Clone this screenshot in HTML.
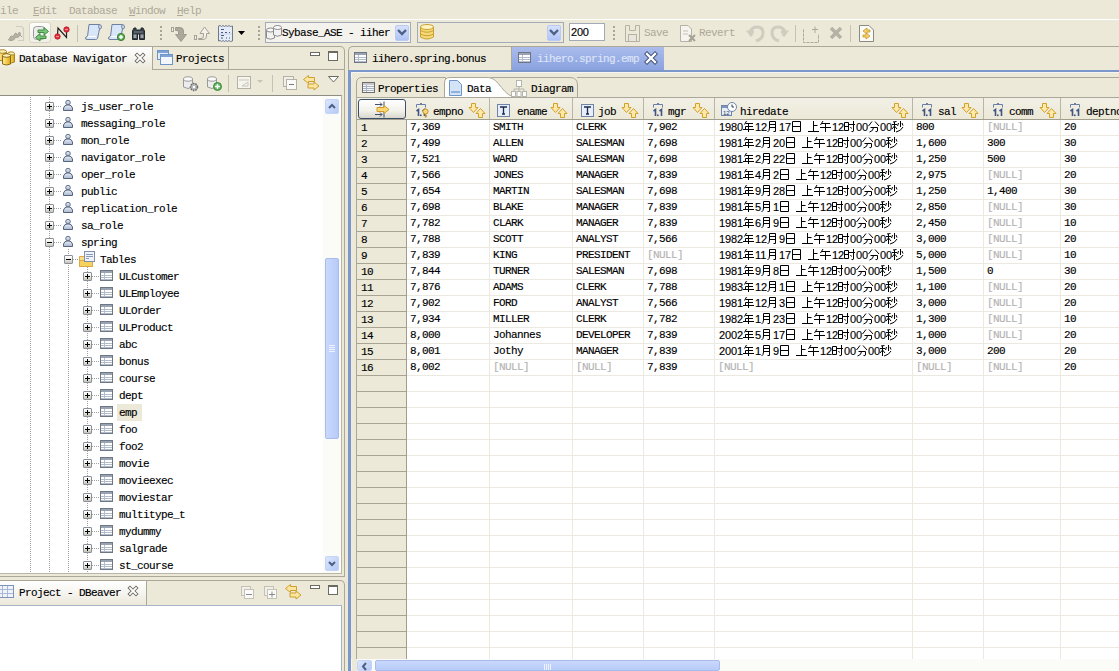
<!DOCTYPE html><html><head><meta charset="utf-8"><style>
*{margin:0;padding:0;box-sizing:border-box}
html,body{width:1119px;height:671px;overflow:hidden;background:#ECE9D8;position:relative}
.ab{position:absolute}
.t{position:absolute;font-family:'Liberation Mono', monospace;font-size:11px;letter-spacing:-0.6px;line-height:12px;white-space:nowrap;color:#000;-webkit-text-stroke:0.15px currentColor}
.s{position:absolute;font-family:'Liberation Sans', sans-serif;font-size:11px;line-height:12px;white-space:nowrap;color:#000;-webkit-text-stroke:0.15px currentColor}
svg{position:absolute;overflow:visible}
</style></head><body>
<svg width="0" height="0" style="position:absolute"><defs><g id="c_nian" fill="none" stroke="#000"><path d="M3.5 0 L1.5 3.5 M2.5 2.5 H10 M2.5 5.5 H10 M0 8.5 H11 M5.5 2.5 V11 M2.5 5.5 V8.5"/></g><g id="c_yue" fill="none" stroke="#000"><path d="M2.5 0.5 V7 Q2.5 10 0.5 11 M2.5 0.5 H8.5 V10.5 H6.5 M2.5 3.5 H8.5 M2.5 6.5 H8.5"/></g><g id="c_ri" fill="none" stroke="#000"><path d="M1.5 0.5 H9.5 V10.5 H1.5 Z M1.5 5.5 H9.5"/></g><g id="c_shang" fill="none" stroke="#000"><path d="M5.5 0 V10.5 M5.5 4.5 H9.5 M0 10.5 H11"/></g><g id="c_wu" fill="none" stroke="#000"><path d="M3 0 L0.5 4 M2 2.5 H10 M0 6.5 H11 M5.5 2.5 V11"/></g><g id="c_shi" fill="none" stroke="#000"><path d="M0.5 1.5 H4.5 V9.5 H0.5 Z M0.5 5.5 H4.5 M5 3.5 H11 M9.5 0 V10 Q9.5 11 7.5 10.5 M6.5 6 L7.5 7.5"/></g><g id="c_fen" fill="none" stroke="#000"><path d="M4 0.5 L0.5 5 M7 0.5 L11 5 M2.5 6.5 H9.5 V10 Q9.5 11 7.5 10.5 M5.5 6.5 Q5.5 10 1.5 11"/></g><g id="c_miao" fill="none" stroke="#000"><path d="M0 3.5 H5 M2.5 1 V11 M0 8 L2.5 5 L5 8 M8.5 0 V6 M6.5 2 L5.5 5 M10 2 L11 4.5 M11 6 Q9 10 4 11 M1 1 L4.5 0.5"/></g></defs></svg>
<div class="t" style="left:-6px;top:5px;color:#ACA899;-webkit-text-stroke:0">File</div>
<div class="t" style="left:33px;top:5px;color:#ACA899;-webkit-text-stroke:0">Edit</div>
<div class="t" style="left:69px;top:5px;color:#ACA899;-webkit-text-stroke:0">Database</div>
<div class="t" style="left:129px;top:5px;color:#ACA899;-webkit-text-stroke:0">Window</div>
<div class="t" style="left:177px;top:5px;color:#ACA899;-webkit-text-stroke:0">Help</div>
<div class="ab" style="left:-6px;top:15px;width:6px;height:1px;background:#ACA899"></div>
<div class="ab" style="left:33px;top:15px;width:6px;height:1px;background:#ACA899"></div>
<div class="ab" style="left:129px;top:15px;width:6px;height:1px;background:#ACA899"></div>
<div class="ab" style="left:177px;top:15px;width:6px;height:1px;background:#ACA899"></div>
<div class="ab" style="left:0px;top:19px;width:1119px;height:1px;background:#fff"></div>
<div class="ab" style="left:29px;top:22px;width:22px;height:21px;border:1px solid #D8D5C8;border-radius:3px;background:linear-gradient(#fdfdfb,#f0efe8)"></div>
<div class="ab" style="left:77px;top:25px;width:1px;height:17px;background:#C5C2B2"></div>
<div class="ab" style="left:160px;top:26px;width:2px;height:2px;background:#A8A595"></div>
<div class="ab" style="left:160px;top:30px;width:2px;height:2px;background:#A8A595"></div>
<div class="ab" style="left:160px;top:34px;width:2px;height:2px;background:#A8A595"></div>
<div class="ab" style="left:160px;top:38px;width:2px;height:2px;background:#A8A595"></div>
<div class="ab" style="left:258px;top:26px;width:2px;height:2px;background:#A8A595"></div>
<div class="ab" style="left:258px;top:30px;width:2px;height:2px;background:#A8A595"></div>
<div class="ab" style="left:258px;top:34px;width:2px;height:2px;background:#A8A595"></div>
<div class="ab" style="left:258px;top:38px;width:2px;height:2px;background:#A8A595"></div>
<div class="ab" style="left:613px;top:26px;width:2px;height:2px;background:#A8A595"></div>
<div class="ab" style="left:613px;top:30px;width:2px;height:2px;background:#A8A595"></div>
<div class="ab" style="left:613px;top:34px;width:2px;height:2px;background:#A8A595"></div>
<div class="ab" style="left:613px;top:38px;width:2px;height:2px;background:#A8A595"></div>
<div class="ab" style="left:795px;top:25px;width:1px;height:17px;background:#C5C2B2"></div>
<div class="ab" style="left:850px;top:25px;width:1px;height:17px;background:#C5C2B2"></div>
<div class="ab" style="left:265px;top:22px;width:146px;height:21px;border:1px solid #A4ABB8;background:#F3F2EC"></div>
<div class="ab" style="left:395px;top:25px;width:14px;height:16px;border-radius:2px;background:linear-gradient(#D6E1FC,#AFC4F6);border:1px solid #B9CBF3"></div>
<svg style="left:397px;top:29px" width="10" height="7" viewBox="0 0 10 7"><path d="M1 1 L5 5 L9 1" stroke="#4D6185" stroke-width="2.4" fill="none"/></svg>
<div class="t" style="left:282px;top:27px;">Sybase_ASE - iiher</div>
<div class="ab" style="left:417px;top:22px;width:147px;height:21px;border:1px solid #A4ABB8;background:#ECE9D8"></div>
<div class="ab" style="left:547px;top:25px;width:14px;height:16px;border-radius:2px;background:linear-gradient(#D6E1FC,#AFC4F6);border:1px solid #B9CBF3"></div>
<svg style="left:549px;top:29px" width="10" height="7" viewBox="0 0 10 7"><path d="M1 1 L5 5 L9 1" stroke="#4D6185" stroke-width="2.4" fill="none"/></svg>
<div class="ab" style="left:569px;top:23px;width:36px;height:18px;border:1px solid #A4ABB8;background:#fff"></div>
<div class="t" style="left:571px;top:26px;font-family:'Liberation Sans', sans-serif;font-size:11px;letter-spacing:-0.2px">200</div>
<div class="t" style="left:644px;top:27px;color:#ACA899;-webkit-text-stroke:0">Save</div>
<div class="t" style="left:699px;top:27px;color:#ACA899;-webkit-text-stroke:0">Revert</div>
<div class="ab" style="left:0px;top:46px;width:345px;height:531px;border:1px solid #ACA899;border-left:none;border-top-right-radius:5px"></div>
<div class="ab" style="left:0px;top:47px;width:152px;height:23px;background:linear-gradient(#FFFFFF,#F3F2EC 60%,#ECE9D8)"></div>
<div class="ab" style="left:152px;top:46px;width:1px;height:24px;background:#ACA899"></div>
<div class="ab" style="left:228px;top:46px;width:1px;height:24px;background:#ACA899"></div>
<div class="ab" style="left:152px;top:69px;width:192px;height:1px;background:#ACA899"></div>
<div class="t" style="left:19px;top:53px;">Database Navigator</div>
<div class="t" style="left:176px;top:53px;">Projects</div>
<div class="ab" style="left:0px;top:95px;width:342px;height:479px;background:#fff;border-top:1px solid #8E8D84;border-right:1px solid #B8B6A8;border-bottom:1px solid #B8B6A8"></div>
<div class="ab" style="left:0px;top:580px;width:345px;height:91px;border:1px solid #ACA899;border-left:none;border-bottom:none;border-top-right-radius:5px"></div>
<div class="ab" style="left:0px;top:581px;width:146px;height:24px;background:linear-gradient(#FFFFFF,#F3F2EC 60%,#ECE9D8)"></div>
<div class="ab" style="left:146px;top:581px;width:1px;height:24px;background:#ACA899"></div>
<div class="t" style="left:19px;top:587px;">Project - DBeaver</div>
<div class="ab" style="left:0px;top:605px;width:342px;height:66px;background:#fff;border-top:1px solid #A5B3C6;border-right:1px solid #A5B3C6"></div>
<div class="ab" style="left:348px;top:46px;width:771px;height:625px;border-left:1px solid #ACA899;border-top:1px solid #ACA899;border-top-left-radius:5px"></div>
<div class="ab" style="left:511px;top:47px;width:1px;height:23px;background:#ACA899"></div>
<div class="t" style="left:372px;top:53px;">iihero.spring.bonus</div>
<div class="ab" style="left:512px;top:47px;width:152px;height:23px;background:linear-gradient(#ABBCEC,#8AA2E0)"></div>
<div class="t" style="left:537px;top:53px;color:#DDE5F7">iihero.spring.emp</div>
<div class="ab" style="left:348px;top:70px;width:771px;height:2px;background:#7C98CA"></div>
<div class="ab" style="left:348px;top:70px;width:3px;height:601px;background:#7C98CA"></div>
<div class="ab" style="left:351px;top:72px;width:768px;height:599px;background:#ECE9D8;border-top:1px solid #F6F5F0;border-left:1px solid #F6F5F0"></div>
<div class="ab" style="left:30px;top:97px;width:1px;height:476px;background:repeating-linear-gradient(to bottom,#A0A0A0 0 1px,transparent 1px 2px)"></div>
<div class="ab" style="left:49px;top:97px;width:1px;height:476px;background:repeating-linear-gradient(to bottom,#A0A0A0 0 1px,transparent 1px 2px)"></div>
<div class="ab" style="left:68px;top:249px;width:1px;height:324px;background:repeating-linear-gradient(to bottom,#A0A0A0 0 1px,transparent 1px 2px)"></div>
<div class="ab" style="left:87px;top:267px;width:1px;height:306px;background:repeating-linear-gradient(to bottom,#A0A0A0 0 1px,transparent 1px 2px)"></div>
<div class="ab" style="left:117px;top:404px;width:25px;height:17px;background:#ECE9D8"></div>
<div class="ab" style="left:54px;top:106px;width:8px;height:1px;background:repeating-linear-gradient(to right,#A0A0A0 0 1px,transparent 1px 2px)"></div>
<div class="ab" style="left:45px;top:102px;width:9px;height:9px;border:1px solid #8A9099;border-radius:1px;background:linear-gradient(#FFFFFF,#E6E5DE 60%,#C4C3BA)"></div>
<div class="ab" style="left:47px;top:106px;width:5px;height:1px;background:#000"></div>
<div class="ab" style="left:49px;top:104px;width:1px;height:5px;background:#000"></div>
<svg style="left:63px;top:100px" width="10" height="11" viewBox="0 0 10 11"><defs><linearGradient id="pg" x1="0" y1="0" x2="0" y2="1"><stop offset="0" stop-color="#E8EEF6"/><stop offset="1" stop-color="#A9B8CE"/></linearGradient></defs><circle cx="5" cy="2.6" r="2.3" fill="url(#pg)" stroke="#62718C" stroke-width="1"/><path d="M0.5 10.5 L0.5 8 Q1.5 5 4 5 L6 5 Q8.5 5 9.5 8 L9.5 10.5 Z" fill="url(#pg)" stroke="#55647F" stroke-width="1"/></svg>
<div class="t" style="left:81px;top:101px;">js_user_role</div>
<div class="ab" style="left:54px;top:123px;width:8px;height:1px;background:repeating-linear-gradient(to right,#A0A0A0 0 1px,transparent 1px 2px)"></div>
<div class="ab" style="left:45px;top:119px;width:9px;height:9px;border:1px solid #8A9099;border-radius:1px;background:linear-gradient(#FFFFFF,#E6E5DE 60%,#C4C3BA)"></div>
<div class="ab" style="left:47px;top:123px;width:5px;height:1px;background:#000"></div>
<div class="ab" style="left:49px;top:121px;width:1px;height:5px;background:#000"></div>
<svg style="left:63px;top:117px" width="10" height="11" viewBox="0 0 10 11"><defs><linearGradient id="pg" x1="0" y1="0" x2="0" y2="1"><stop offset="0" stop-color="#E8EEF6"/><stop offset="1" stop-color="#A9B8CE"/></linearGradient></defs><circle cx="5" cy="2.6" r="2.3" fill="url(#pg)" stroke="#62718C" stroke-width="1"/><path d="M0.5 10.5 L0.5 8 Q1.5 5 4 5 L6 5 Q8.5 5 9.5 8 L9.5 10.5 Z" fill="url(#pg)" stroke="#55647F" stroke-width="1"/></svg>
<div class="t" style="left:81px;top:118px;">messaging_role</div>
<div class="ab" style="left:54px;top:140px;width:8px;height:1px;background:repeating-linear-gradient(to right,#A0A0A0 0 1px,transparent 1px 2px)"></div>
<div class="ab" style="left:45px;top:136px;width:9px;height:9px;border:1px solid #8A9099;border-radius:1px;background:linear-gradient(#FFFFFF,#E6E5DE 60%,#C4C3BA)"></div>
<div class="ab" style="left:47px;top:140px;width:5px;height:1px;background:#000"></div>
<div class="ab" style="left:49px;top:138px;width:1px;height:5px;background:#000"></div>
<svg style="left:63px;top:134px" width="10" height="11" viewBox="0 0 10 11"><defs><linearGradient id="pg" x1="0" y1="0" x2="0" y2="1"><stop offset="0" stop-color="#E8EEF6"/><stop offset="1" stop-color="#A9B8CE"/></linearGradient></defs><circle cx="5" cy="2.6" r="2.3" fill="url(#pg)" stroke="#62718C" stroke-width="1"/><path d="M0.5 10.5 L0.5 8 Q1.5 5 4 5 L6 5 Q8.5 5 9.5 8 L9.5 10.5 Z" fill="url(#pg)" stroke="#55647F" stroke-width="1"/></svg>
<div class="t" style="left:81px;top:135px;">mon_role</div>
<div class="ab" style="left:54px;top:157px;width:8px;height:1px;background:repeating-linear-gradient(to right,#A0A0A0 0 1px,transparent 1px 2px)"></div>
<div class="ab" style="left:45px;top:153px;width:9px;height:9px;border:1px solid #8A9099;border-radius:1px;background:linear-gradient(#FFFFFF,#E6E5DE 60%,#C4C3BA)"></div>
<div class="ab" style="left:47px;top:157px;width:5px;height:1px;background:#000"></div>
<div class="ab" style="left:49px;top:155px;width:1px;height:5px;background:#000"></div>
<svg style="left:63px;top:151px" width="10" height="11" viewBox="0 0 10 11"><defs><linearGradient id="pg" x1="0" y1="0" x2="0" y2="1"><stop offset="0" stop-color="#E8EEF6"/><stop offset="1" stop-color="#A9B8CE"/></linearGradient></defs><circle cx="5" cy="2.6" r="2.3" fill="url(#pg)" stroke="#62718C" stroke-width="1"/><path d="M0.5 10.5 L0.5 8 Q1.5 5 4 5 L6 5 Q8.5 5 9.5 8 L9.5 10.5 Z" fill="url(#pg)" stroke="#55647F" stroke-width="1"/></svg>
<div class="t" style="left:81px;top:152px;">navigator_role</div>
<div class="ab" style="left:54px;top:174px;width:8px;height:1px;background:repeating-linear-gradient(to right,#A0A0A0 0 1px,transparent 1px 2px)"></div>
<div class="ab" style="left:45px;top:170px;width:9px;height:9px;border:1px solid #8A9099;border-radius:1px;background:linear-gradient(#FFFFFF,#E6E5DE 60%,#C4C3BA)"></div>
<div class="ab" style="left:47px;top:174px;width:5px;height:1px;background:#000"></div>
<div class="ab" style="left:49px;top:172px;width:1px;height:5px;background:#000"></div>
<svg style="left:63px;top:168px" width="10" height="11" viewBox="0 0 10 11"><defs><linearGradient id="pg" x1="0" y1="0" x2="0" y2="1"><stop offset="0" stop-color="#E8EEF6"/><stop offset="1" stop-color="#A9B8CE"/></linearGradient></defs><circle cx="5" cy="2.6" r="2.3" fill="url(#pg)" stroke="#62718C" stroke-width="1"/><path d="M0.5 10.5 L0.5 8 Q1.5 5 4 5 L6 5 Q8.5 5 9.5 8 L9.5 10.5 Z" fill="url(#pg)" stroke="#55647F" stroke-width="1"/></svg>
<div class="t" style="left:81px;top:169px;">oper_role</div>
<div class="ab" style="left:54px;top:191px;width:8px;height:1px;background:repeating-linear-gradient(to right,#A0A0A0 0 1px,transparent 1px 2px)"></div>
<div class="ab" style="left:45px;top:187px;width:9px;height:9px;border:1px solid #8A9099;border-radius:1px;background:linear-gradient(#FFFFFF,#E6E5DE 60%,#C4C3BA)"></div>
<div class="ab" style="left:47px;top:191px;width:5px;height:1px;background:#000"></div>
<div class="ab" style="left:49px;top:189px;width:1px;height:5px;background:#000"></div>
<svg style="left:63px;top:185px" width="10" height="11" viewBox="0 0 10 11"><defs><linearGradient id="pg" x1="0" y1="0" x2="0" y2="1"><stop offset="0" stop-color="#E8EEF6"/><stop offset="1" stop-color="#A9B8CE"/></linearGradient></defs><circle cx="5" cy="2.6" r="2.3" fill="url(#pg)" stroke="#62718C" stroke-width="1"/><path d="M0.5 10.5 L0.5 8 Q1.5 5 4 5 L6 5 Q8.5 5 9.5 8 L9.5 10.5 Z" fill="url(#pg)" stroke="#55647F" stroke-width="1"/></svg>
<div class="t" style="left:81px;top:186px;">public</div>
<div class="ab" style="left:54px;top:208px;width:8px;height:1px;background:repeating-linear-gradient(to right,#A0A0A0 0 1px,transparent 1px 2px)"></div>
<div class="ab" style="left:45px;top:204px;width:9px;height:9px;border:1px solid #8A9099;border-radius:1px;background:linear-gradient(#FFFFFF,#E6E5DE 60%,#C4C3BA)"></div>
<div class="ab" style="left:47px;top:208px;width:5px;height:1px;background:#000"></div>
<div class="ab" style="left:49px;top:206px;width:1px;height:5px;background:#000"></div>
<svg style="left:63px;top:202px" width="10" height="11" viewBox="0 0 10 11"><defs><linearGradient id="pg" x1="0" y1="0" x2="0" y2="1"><stop offset="0" stop-color="#E8EEF6"/><stop offset="1" stop-color="#A9B8CE"/></linearGradient></defs><circle cx="5" cy="2.6" r="2.3" fill="url(#pg)" stroke="#62718C" stroke-width="1"/><path d="M0.5 10.5 L0.5 8 Q1.5 5 4 5 L6 5 Q8.5 5 9.5 8 L9.5 10.5 Z" fill="url(#pg)" stroke="#55647F" stroke-width="1"/></svg>
<div class="t" style="left:81px;top:203px;">replication_role</div>
<div class="ab" style="left:54px;top:225px;width:8px;height:1px;background:repeating-linear-gradient(to right,#A0A0A0 0 1px,transparent 1px 2px)"></div>
<div class="ab" style="left:45px;top:221px;width:9px;height:9px;border:1px solid #8A9099;border-radius:1px;background:linear-gradient(#FFFFFF,#E6E5DE 60%,#C4C3BA)"></div>
<div class="ab" style="left:47px;top:225px;width:5px;height:1px;background:#000"></div>
<div class="ab" style="left:49px;top:223px;width:1px;height:5px;background:#000"></div>
<svg style="left:63px;top:219px" width="10" height="11" viewBox="0 0 10 11"><defs><linearGradient id="pg" x1="0" y1="0" x2="0" y2="1"><stop offset="0" stop-color="#E8EEF6"/><stop offset="1" stop-color="#A9B8CE"/></linearGradient></defs><circle cx="5" cy="2.6" r="2.3" fill="url(#pg)" stroke="#62718C" stroke-width="1"/><path d="M0.5 10.5 L0.5 8 Q1.5 5 4 5 L6 5 Q8.5 5 9.5 8 L9.5 10.5 Z" fill="url(#pg)" stroke="#55647F" stroke-width="1"/></svg>
<div class="t" style="left:81px;top:220px;">sa_role</div>
<div class="ab" style="left:54px;top:242px;width:8px;height:1px;background:repeating-linear-gradient(to right,#A0A0A0 0 1px,transparent 1px 2px)"></div>
<div class="ab" style="left:45px;top:238px;width:9px;height:9px;border:1px solid #8A9099;border-radius:1px;background:linear-gradient(#FFFFFF,#E6E5DE 60%,#C4C3BA)"></div>
<div class="ab" style="left:47px;top:242px;width:5px;height:1px;background:#000"></div>
<svg style="left:63px;top:236px" width="10" height="11" viewBox="0 0 10 11"><defs><linearGradient id="pg" x1="0" y1="0" x2="0" y2="1"><stop offset="0" stop-color="#E8EEF6"/><stop offset="1" stop-color="#A9B8CE"/></linearGradient></defs><circle cx="5" cy="2.6" r="2.3" fill="url(#pg)" stroke="#62718C" stroke-width="1"/><path d="M0.5 10.5 L0.5 8 Q1.5 5 4 5 L6 5 Q8.5 5 9.5 8 L9.5 10.5 Z" fill="url(#pg)" stroke="#55647F" stroke-width="1"/></svg>
<div class="t" style="left:81px;top:237px;">spring</div>
<div class="ab" style="left:73px;top:259px;width:8px;height:1px;background:repeating-linear-gradient(to right,#A0A0A0 0 1px,transparent 1px 2px)"></div>
<div class="ab" style="left:64px;top:255px;width:9px;height:9px;border:1px solid #8A9099;border-radius:1px;background:linear-gradient(#FFFFFF,#E6E5DE 60%,#C4C3BA)"></div>
<div class="ab" style="left:66px;top:259px;width:5px;height:1px;background:#000"></div>
<svg style="left:79px;top:251px" width="17" height="17" viewBox="0 0 17 17"><path d="M0.5 5.5 L5 5.5 L6 4.5 L13.5 4.5 L13.5 15.5 L0.5 15.5 Z" fill="#F9DD8C" stroke="#DDA848"/><rect x="0.5" y="9.5" width="13" height="6" fill="#F6D25E" stroke="#DDA848"/><rect x="5.5" y="0.5" width="10" height="10" fill="#EEF3FA" stroke="#7F8FAA"/><path d="M7 3.5 H14 M7 5.5 H14 M7 7.5 H10" stroke="#8A9AB5"/></svg>
<div class="t" style="left:100px;top:254px;">Tables</div>
<div class="ab" style="left:92px;top:276px;width:8px;height:1px;background:repeating-linear-gradient(to right,#A0A0A0 0 1px,transparent 1px 2px)"></div>
<div class="ab" style="left:83px;top:272px;width:9px;height:9px;border:1px solid #8A9099;border-radius:1px;background:linear-gradient(#FFFFFF,#E6E5DE 60%,#C4C3BA)"></div>
<div class="ab" style="left:85px;top:276px;width:5px;height:1px;background:#000"></div>
<div class="ab" style="left:87px;top:274px;width:1px;height:5px;background:#000"></div>
<svg style="left:100px;top:270px" width="13" height="11" viewBox="0 0 13 11"><rect x="0.5" y="0.5" width="12" height="10" fill="#FFFFFF" stroke="#6F7785"/><rect x="1" y="1" width="11" height="2" fill="#9AA3B2"/><line x1="1" y1="5.5" x2="12" y2="5.5" stroke="#B3BCCB" stroke-width="1"/><line x1="1" y1="7.5" x2="12" y2="7.5" stroke="#B3BCCB" stroke-width="1"/><line x1="1" y1="9.5" x2="12" y2="9.5" stroke="#B3BCCB" stroke-width="1"/><line x1="4.5" y1="3" x2="4.5" y2="10" stroke="#B3BCCB"/></svg>
<div class="t" style="left:119px;top:271px;">ULCustomer</div>
<div class="ab" style="left:92px;top:293px;width:8px;height:1px;background:repeating-linear-gradient(to right,#A0A0A0 0 1px,transparent 1px 2px)"></div>
<div class="ab" style="left:83px;top:289px;width:9px;height:9px;border:1px solid #8A9099;border-radius:1px;background:linear-gradient(#FFFFFF,#E6E5DE 60%,#C4C3BA)"></div>
<div class="ab" style="left:85px;top:293px;width:5px;height:1px;background:#000"></div>
<div class="ab" style="left:87px;top:291px;width:1px;height:5px;background:#000"></div>
<svg style="left:100px;top:287px" width="13" height="11" viewBox="0 0 13 11"><rect x="0.5" y="0.5" width="12" height="10" fill="#FFFFFF" stroke="#6F7785"/><rect x="1" y="1" width="11" height="2" fill="#9AA3B2"/><line x1="1" y1="5.5" x2="12" y2="5.5" stroke="#B3BCCB" stroke-width="1"/><line x1="1" y1="7.5" x2="12" y2="7.5" stroke="#B3BCCB" stroke-width="1"/><line x1="1" y1="9.5" x2="12" y2="9.5" stroke="#B3BCCB" stroke-width="1"/><line x1="4.5" y1="3" x2="4.5" y2="10" stroke="#B3BCCB"/></svg>
<div class="t" style="left:119px;top:288px;">ULEmployee</div>
<div class="ab" style="left:92px;top:310px;width:8px;height:1px;background:repeating-linear-gradient(to right,#A0A0A0 0 1px,transparent 1px 2px)"></div>
<div class="ab" style="left:83px;top:306px;width:9px;height:9px;border:1px solid #8A9099;border-radius:1px;background:linear-gradient(#FFFFFF,#E6E5DE 60%,#C4C3BA)"></div>
<div class="ab" style="left:85px;top:310px;width:5px;height:1px;background:#000"></div>
<div class="ab" style="left:87px;top:308px;width:1px;height:5px;background:#000"></div>
<svg style="left:100px;top:304px" width="13" height="11" viewBox="0 0 13 11"><rect x="0.5" y="0.5" width="12" height="10" fill="#FFFFFF" stroke="#6F7785"/><rect x="1" y="1" width="11" height="2" fill="#9AA3B2"/><line x1="1" y1="5.5" x2="12" y2="5.5" stroke="#B3BCCB" stroke-width="1"/><line x1="1" y1="7.5" x2="12" y2="7.5" stroke="#B3BCCB" stroke-width="1"/><line x1="1" y1="9.5" x2="12" y2="9.5" stroke="#B3BCCB" stroke-width="1"/><line x1="4.5" y1="3" x2="4.5" y2="10" stroke="#B3BCCB"/></svg>
<div class="t" style="left:119px;top:305px;">ULOrder</div>
<div class="ab" style="left:92px;top:327px;width:8px;height:1px;background:repeating-linear-gradient(to right,#A0A0A0 0 1px,transparent 1px 2px)"></div>
<div class="ab" style="left:83px;top:323px;width:9px;height:9px;border:1px solid #8A9099;border-radius:1px;background:linear-gradient(#FFFFFF,#E6E5DE 60%,#C4C3BA)"></div>
<div class="ab" style="left:85px;top:327px;width:5px;height:1px;background:#000"></div>
<div class="ab" style="left:87px;top:325px;width:1px;height:5px;background:#000"></div>
<svg style="left:100px;top:321px" width="13" height="11" viewBox="0 0 13 11"><rect x="0.5" y="0.5" width="12" height="10" fill="#FFFFFF" stroke="#6F7785"/><rect x="1" y="1" width="11" height="2" fill="#9AA3B2"/><line x1="1" y1="5.5" x2="12" y2="5.5" stroke="#B3BCCB" stroke-width="1"/><line x1="1" y1="7.5" x2="12" y2="7.5" stroke="#B3BCCB" stroke-width="1"/><line x1="1" y1="9.5" x2="12" y2="9.5" stroke="#B3BCCB" stroke-width="1"/><line x1="4.5" y1="3" x2="4.5" y2="10" stroke="#B3BCCB"/></svg>
<div class="t" style="left:119px;top:322px;">ULProduct</div>
<div class="ab" style="left:92px;top:344px;width:8px;height:1px;background:repeating-linear-gradient(to right,#A0A0A0 0 1px,transparent 1px 2px)"></div>
<div class="ab" style="left:83px;top:340px;width:9px;height:9px;border:1px solid #8A9099;border-radius:1px;background:linear-gradient(#FFFFFF,#E6E5DE 60%,#C4C3BA)"></div>
<div class="ab" style="left:85px;top:344px;width:5px;height:1px;background:#000"></div>
<div class="ab" style="left:87px;top:342px;width:1px;height:5px;background:#000"></div>
<svg style="left:100px;top:338px" width="13" height="11" viewBox="0 0 13 11"><rect x="0.5" y="0.5" width="12" height="10" fill="#FFFFFF" stroke="#6F7785"/><rect x="1" y="1" width="11" height="2" fill="#9AA3B2"/><line x1="1" y1="5.5" x2="12" y2="5.5" stroke="#B3BCCB" stroke-width="1"/><line x1="1" y1="7.5" x2="12" y2="7.5" stroke="#B3BCCB" stroke-width="1"/><line x1="1" y1="9.5" x2="12" y2="9.5" stroke="#B3BCCB" stroke-width="1"/><line x1="4.5" y1="3" x2="4.5" y2="10" stroke="#B3BCCB"/></svg>
<div class="t" style="left:119px;top:339px;">abc</div>
<div class="ab" style="left:92px;top:361px;width:8px;height:1px;background:repeating-linear-gradient(to right,#A0A0A0 0 1px,transparent 1px 2px)"></div>
<div class="ab" style="left:83px;top:357px;width:9px;height:9px;border:1px solid #8A9099;border-radius:1px;background:linear-gradient(#FFFFFF,#E6E5DE 60%,#C4C3BA)"></div>
<div class="ab" style="left:85px;top:361px;width:5px;height:1px;background:#000"></div>
<div class="ab" style="left:87px;top:359px;width:1px;height:5px;background:#000"></div>
<svg style="left:100px;top:355px" width="13" height="11" viewBox="0 0 13 11"><rect x="0.5" y="0.5" width="12" height="10" fill="#FFFFFF" stroke="#6F7785"/><rect x="1" y="1" width="11" height="2" fill="#9AA3B2"/><line x1="1" y1="5.5" x2="12" y2="5.5" stroke="#B3BCCB" stroke-width="1"/><line x1="1" y1="7.5" x2="12" y2="7.5" stroke="#B3BCCB" stroke-width="1"/><line x1="1" y1="9.5" x2="12" y2="9.5" stroke="#B3BCCB" stroke-width="1"/><line x1="4.5" y1="3" x2="4.5" y2="10" stroke="#B3BCCB"/></svg>
<div class="t" style="left:119px;top:356px;">bonus</div>
<div class="ab" style="left:92px;top:378px;width:8px;height:1px;background:repeating-linear-gradient(to right,#A0A0A0 0 1px,transparent 1px 2px)"></div>
<div class="ab" style="left:83px;top:374px;width:9px;height:9px;border:1px solid #8A9099;border-radius:1px;background:linear-gradient(#FFFFFF,#E6E5DE 60%,#C4C3BA)"></div>
<div class="ab" style="left:85px;top:378px;width:5px;height:1px;background:#000"></div>
<div class="ab" style="left:87px;top:376px;width:1px;height:5px;background:#000"></div>
<svg style="left:100px;top:372px" width="13" height="11" viewBox="0 0 13 11"><rect x="0.5" y="0.5" width="12" height="10" fill="#FFFFFF" stroke="#6F7785"/><rect x="1" y="1" width="11" height="2" fill="#9AA3B2"/><line x1="1" y1="5.5" x2="12" y2="5.5" stroke="#B3BCCB" stroke-width="1"/><line x1="1" y1="7.5" x2="12" y2="7.5" stroke="#B3BCCB" stroke-width="1"/><line x1="1" y1="9.5" x2="12" y2="9.5" stroke="#B3BCCB" stroke-width="1"/><line x1="4.5" y1="3" x2="4.5" y2="10" stroke="#B3BCCB"/></svg>
<div class="t" style="left:119px;top:373px;">course</div>
<div class="ab" style="left:92px;top:395px;width:8px;height:1px;background:repeating-linear-gradient(to right,#A0A0A0 0 1px,transparent 1px 2px)"></div>
<div class="ab" style="left:83px;top:391px;width:9px;height:9px;border:1px solid #8A9099;border-radius:1px;background:linear-gradient(#FFFFFF,#E6E5DE 60%,#C4C3BA)"></div>
<div class="ab" style="left:85px;top:395px;width:5px;height:1px;background:#000"></div>
<div class="ab" style="left:87px;top:393px;width:1px;height:5px;background:#000"></div>
<svg style="left:100px;top:389px" width="13" height="11" viewBox="0 0 13 11"><rect x="0.5" y="0.5" width="12" height="10" fill="#FFFFFF" stroke="#6F7785"/><rect x="1" y="1" width="11" height="2" fill="#9AA3B2"/><line x1="1" y1="5.5" x2="12" y2="5.5" stroke="#B3BCCB" stroke-width="1"/><line x1="1" y1="7.5" x2="12" y2="7.5" stroke="#B3BCCB" stroke-width="1"/><line x1="1" y1="9.5" x2="12" y2="9.5" stroke="#B3BCCB" stroke-width="1"/><line x1="4.5" y1="3" x2="4.5" y2="10" stroke="#B3BCCB"/></svg>
<div class="t" style="left:119px;top:390px;">dept</div>
<div class="ab" style="left:92px;top:412px;width:8px;height:1px;background:repeating-linear-gradient(to right,#A0A0A0 0 1px,transparent 1px 2px)"></div>
<div class="ab" style="left:83px;top:408px;width:9px;height:9px;border:1px solid #8A9099;border-radius:1px;background:linear-gradient(#FFFFFF,#E6E5DE 60%,#C4C3BA)"></div>
<div class="ab" style="left:85px;top:412px;width:5px;height:1px;background:#000"></div>
<div class="ab" style="left:87px;top:410px;width:1px;height:5px;background:#000"></div>
<svg style="left:100px;top:406px" width="13" height="11" viewBox="0 0 13 11"><rect x="0.5" y="0.5" width="12" height="10" fill="#FFFFFF" stroke="#6F7785"/><rect x="1" y="1" width="11" height="2" fill="#9AA3B2"/><line x1="1" y1="5.5" x2="12" y2="5.5" stroke="#B3BCCB" stroke-width="1"/><line x1="1" y1="7.5" x2="12" y2="7.5" stroke="#B3BCCB" stroke-width="1"/><line x1="1" y1="9.5" x2="12" y2="9.5" stroke="#B3BCCB" stroke-width="1"/><line x1="4.5" y1="3" x2="4.5" y2="10" stroke="#B3BCCB"/></svg>
<div class="t" style="left:119px;top:407px;">emp</div>
<div class="ab" style="left:92px;top:429px;width:8px;height:1px;background:repeating-linear-gradient(to right,#A0A0A0 0 1px,transparent 1px 2px)"></div>
<div class="ab" style="left:83px;top:425px;width:9px;height:9px;border:1px solid #8A9099;border-radius:1px;background:linear-gradient(#FFFFFF,#E6E5DE 60%,#C4C3BA)"></div>
<div class="ab" style="left:85px;top:429px;width:5px;height:1px;background:#000"></div>
<div class="ab" style="left:87px;top:427px;width:1px;height:5px;background:#000"></div>
<svg style="left:100px;top:423px" width="13" height="11" viewBox="0 0 13 11"><rect x="0.5" y="0.5" width="12" height="10" fill="#FFFFFF" stroke="#6F7785"/><rect x="1" y="1" width="11" height="2" fill="#9AA3B2"/><line x1="1" y1="5.5" x2="12" y2="5.5" stroke="#B3BCCB" stroke-width="1"/><line x1="1" y1="7.5" x2="12" y2="7.5" stroke="#B3BCCB" stroke-width="1"/><line x1="1" y1="9.5" x2="12" y2="9.5" stroke="#B3BCCB" stroke-width="1"/><line x1="4.5" y1="3" x2="4.5" y2="10" stroke="#B3BCCB"/></svg>
<div class="t" style="left:119px;top:424px;">foo</div>
<div class="ab" style="left:92px;top:446px;width:8px;height:1px;background:repeating-linear-gradient(to right,#A0A0A0 0 1px,transparent 1px 2px)"></div>
<div class="ab" style="left:83px;top:442px;width:9px;height:9px;border:1px solid #8A9099;border-radius:1px;background:linear-gradient(#FFFFFF,#E6E5DE 60%,#C4C3BA)"></div>
<div class="ab" style="left:85px;top:446px;width:5px;height:1px;background:#000"></div>
<div class="ab" style="left:87px;top:444px;width:1px;height:5px;background:#000"></div>
<svg style="left:100px;top:440px" width="13" height="11" viewBox="0 0 13 11"><rect x="0.5" y="0.5" width="12" height="10" fill="#FFFFFF" stroke="#6F7785"/><rect x="1" y="1" width="11" height="2" fill="#9AA3B2"/><line x1="1" y1="5.5" x2="12" y2="5.5" stroke="#B3BCCB" stroke-width="1"/><line x1="1" y1="7.5" x2="12" y2="7.5" stroke="#B3BCCB" stroke-width="1"/><line x1="1" y1="9.5" x2="12" y2="9.5" stroke="#B3BCCB" stroke-width="1"/><line x1="4.5" y1="3" x2="4.5" y2="10" stroke="#B3BCCB"/></svg>
<div class="t" style="left:119px;top:441px;">foo2</div>
<div class="ab" style="left:92px;top:463px;width:8px;height:1px;background:repeating-linear-gradient(to right,#A0A0A0 0 1px,transparent 1px 2px)"></div>
<div class="ab" style="left:83px;top:459px;width:9px;height:9px;border:1px solid #8A9099;border-radius:1px;background:linear-gradient(#FFFFFF,#E6E5DE 60%,#C4C3BA)"></div>
<div class="ab" style="left:85px;top:463px;width:5px;height:1px;background:#000"></div>
<div class="ab" style="left:87px;top:461px;width:1px;height:5px;background:#000"></div>
<svg style="left:100px;top:457px" width="13" height="11" viewBox="0 0 13 11"><rect x="0.5" y="0.5" width="12" height="10" fill="#FFFFFF" stroke="#6F7785"/><rect x="1" y="1" width="11" height="2" fill="#9AA3B2"/><line x1="1" y1="5.5" x2="12" y2="5.5" stroke="#B3BCCB" stroke-width="1"/><line x1="1" y1="7.5" x2="12" y2="7.5" stroke="#B3BCCB" stroke-width="1"/><line x1="1" y1="9.5" x2="12" y2="9.5" stroke="#B3BCCB" stroke-width="1"/><line x1="4.5" y1="3" x2="4.5" y2="10" stroke="#B3BCCB"/></svg>
<div class="t" style="left:119px;top:458px;">movie</div>
<div class="ab" style="left:92px;top:480px;width:8px;height:1px;background:repeating-linear-gradient(to right,#A0A0A0 0 1px,transparent 1px 2px)"></div>
<div class="ab" style="left:83px;top:476px;width:9px;height:9px;border:1px solid #8A9099;border-radius:1px;background:linear-gradient(#FFFFFF,#E6E5DE 60%,#C4C3BA)"></div>
<div class="ab" style="left:85px;top:480px;width:5px;height:1px;background:#000"></div>
<div class="ab" style="left:87px;top:478px;width:1px;height:5px;background:#000"></div>
<svg style="left:100px;top:474px" width="13" height="11" viewBox="0 0 13 11"><rect x="0.5" y="0.5" width="12" height="10" fill="#FFFFFF" stroke="#6F7785"/><rect x="1" y="1" width="11" height="2" fill="#9AA3B2"/><line x1="1" y1="5.5" x2="12" y2="5.5" stroke="#B3BCCB" stroke-width="1"/><line x1="1" y1="7.5" x2="12" y2="7.5" stroke="#B3BCCB" stroke-width="1"/><line x1="1" y1="9.5" x2="12" y2="9.5" stroke="#B3BCCB" stroke-width="1"/><line x1="4.5" y1="3" x2="4.5" y2="10" stroke="#B3BCCB"/></svg>
<div class="t" style="left:119px;top:475px;">movieexec</div>
<div class="ab" style="left:92px;top:497px;width:8px;height:1px;background:repeating-linear-gradient(to right,#A0A0A0 0 1px,transparent 1px 2px)"></div>
<div class="ab" style="left:83px;top:493px;width:9px;height:9px;border:1px solid #8A9099;border-radius:1px;background:linear-gradient(#FFFFFF,#E6E5DE 60%,#C4C3BA)"></div>
<div class="ab" style="left:85px;top:497px;width:5px;height:1px;background:#000"></div>
<div class="ab" style="left:87px;top:495px;width:1px;height:5px;background:#000"></div>
<svg style="left:100px;top:491px" width="13" height="11" viewBox="0 0 13 11"><rect x="0.5" y="0.5" width="12" height="10" fill="#FFFFFF" stroke="#6F7785"/><rect x="1" y="1" width="11" height="2" fill="#9AA3B2"/><line x1="1" y1="5.5" x2="12" y2="5.5" stroke="#B3BCCB" stroke-width="1"/><line x1="1" y1="7.5" x2="12" y2="7.5" stroke="#B3BCCB" stroke-width="1"/><line x1="1" y1="9.5" x2="12" y2="9.5" stroke="#B3BCCB" stroke-width="1"/><line x1="4.5" y1="3" x2="4.5" y2="10" stroke="#B3BCCB"/></svg>
<div class="t" style="left:119px;top:492px;">moviestar</div>
<div class="ab" style="left:92px;top:514px;width:8px;height:1px;background:repeating-linear-gradient(to right,#A0A0A0 0 1px,transparent 1px 2px)"></div>
<div class="ab" style="left:83px;top:510px;width:9px;height:9px;border:1px solid #8A9099;border-radius:1px;background:linear-gradient(#FFFFFF,#E6E5DE 60%,#C4C3BA)"></div>
<div class="ab" style="left:85px;top:514px;width:5px;height:1px;background:#000"></div>
<div class="ab" style="left:87px;top:512px;width:1px;height:5px;background:#000"></div>
<svg style="left:100px;top:508px" width="13" height="11" viewBox="0 0 13 11"><rect x="0.5" y="0.5" width="12" height="10" fill="#FFFFFF" stroke="#6F7785"/><rect x="1" y="1" width="11" height="2" fill="#9AA3B2"/><line x1="1" y1="5.5" x2="12" y2="5.5" stroke="#B3BCCB" stroke-width="1"/><line x1="1" y1="7.5" x2="12" y2="7.5" stroke="#B3BCCB" stroke-width="1"/><line x1="1" y1="9.5" x2="12" y2="9.5" stroke="#B3BCCB" stroke-width="1"/><line x1="4.5" y1="3" x2="4.5" y2="10" stroke="#B3BCCB"/></svg>
<div class="t" style="left:119px;top:509px;">multitype_t</div>
<div class="ab" style="left:92px;top:531px;width:8px;height:1px;background:repeating-linear-gradient(to right,#A0A0A0 0 1px,transparent 1px 2px)"></div>
<div class="ab" style="left:83px;top:527px;width:9px;height:9px;border:1px solid #8A9099;border-radius:1px;background:linear-gradient(#FFFFFF,#E6E5DE 60%,#C4C3BA)"></div>
<div class="ab" style="left:85px;top:531px;width:5px;height:1px;background:#000"></div>
<div class="ab" style="left:87px;top:529px;width:1px;height:5px;background:#000"></div>
<svg style="left:100px;top:525px" width="13" height="11" viewBox="0 0 13 11"><rect x="0.5" y="0.5" width="12" height="10" fill="#FFFFFF" stroke="#6F7785"/><rect x="1" y="1" width="11" height="2" fill="#9AA3B2"/><line x1="1" y1="5.5" x2="12" y2="5.5" stroke="#B3BCCB" stroke-width="1"/><line x1="1" y1="7.5" x2="12" y2="7.5" stroke="#B3BCCB" stroke-width="1"/><line x1="1" y1="9.5" x2="12" y2="9.5" stroke="#B3BCCB" stroke-width="1"/><line x1="4.5" y1="3" x2="4.5" y2="10" stroke="#B3BCCB"/></svg>
<div class="t" style="left:119px;top:526px;">mydummy</div>
<div class="ab" style="left:92px;top:548px;width:8px;height:1px;background:repeating-linear-gradient(to right,#A0A0A0 0 1px,transparent 1px 2px)"></div>
<div class="ab" style="left:83px;top:544px;width:9px;height:9px;border:1px solid #8A9099;border-radius:1px;background:linear-gradient(#FFFFFF,#E6E5DE 60%,#C4C3BA)"></div>
<div class="ab" style="left:85px;top:548px;width:5px;height:1px;background:#000"></div>
<div class="ab" style="left:87px;top:546px;width:1px;height:5px;background:#000"></div>
<svg style="left:100px;top:542px" width="13" height="11" viewBox="0 0 13 11"><rect x="0.5" y="0.5" width="12" height="10" fill="#FFFFFF" stroke="#6F7785"/><rect x="1" y="1" width="11" height="2" fill="#9AA3B2"/><line x1="1" y1="5.5" x2="12" y2="5.5" stroke="#B3BCCB" stroke-width="1"/><line x1="1" y1="7.5" x2="12" y2="7.5" stroke="#B3BCCB" stroke-width="1"/><line x1="1" y1="9.5" x2="12" y2="9.5" stroke="#B3BCCB" stroke-width="1"/><line x1="4.5" y1="3" x2="4.5" y2="10" stroke="#B3BCCB"/></svg>
<div class="t" style="left:119px;top:543px;">salgrade</div>
<div class="ab" style="left:92px;top:565px;width:8px;height:1px;background:repeating-linear-gradient(to right,#A0A0A0 0 1px,transparent 1px 2px)"></div>
<div class="ab" style="left:83px;top:561px;width:9px;height:9px;border:1px solid #8A9099;border-radius:1px;background:linear-gradient(#FFFFFF,#E6E5DE 60%,#C4C3BA)"></div>
<div class="ab" style="left:85px;top:565px;width:5px;height:1px;background:#000"></div>
<div class="ab" style="left:87px;top:563px;width:1px;height:5px;background:#000"></div>
<svg style="left:100px;top:559px" width="13" height="11" viewBox="0 0 13 11"><rect x="0.5" y="0.5" width="12" height="10" fill="#FFFFFF" stroke="#6F7785"/><rect x="1" y="1" width="11" height="2" fill="#9AA3B2"/><line x1="1" y1="5.5" x2="12" y2="5.5" stroke="#B3BCCB" stroke-width="1"/><line x1="1" y1="7.5" x2="12" y2="7.5" stroke="#B3BCCB" stroke-width="1"/><line x1="1" y1="9.5" x2="12" y2="9.5" stroke="#B3BCCB" stroke-width="1"/><line x1="4.5" y1="3" x2="4.5" y2="10" stroke="#B3BCCB"/></svg>
<div class="t" style="left:119px;top:560px;">st_course</div>
<div class="ab" style="left:323px;top:96px;width:18px;height:477px;background:#FBFBF8"></div>
<div class="ab" style="left:325px;top:99px;width:14px;height:15px;border-radius:2px;background:linear-gradient(135deg,#DCE6FD,#B6CAF6);border:1px solid #C3D3FA"></div>
<svg style="left:328px;top:103px" width="8" height="6" viewBox="0 0 8 6"><path d="M1 5 L4 2 L7 5" stroke="#4D6185" stroke-width="2" fill="none"/></svg>
<div class="ab" style="left:325px;top:258px;width:14px;height:181px;border-radius:2px;background:linear-gradient(to right,#CAD8FC,#B7CBF8);border:1px solid #A8BCEB"></div>
<div class="ab" style="left:329px;top:345px;width:6px;height:1px;background:#EEF3FE"></div>
<div class="ab" style="left:329px;top:347px;width:6px;height:1px;background:#EEF3FE"></div>
<div class="ab" style="left:329px;top:349px;width:6px;height:1px;background:#EEF3FE"></div>
<div class="ab" style="left:329px;top:351px;width:6px;height:1px;background:#EEF3FE"></div>
<div class="ab" style="left:325px;top:556px;width:14px;height:15px;border-radius:2px;background:linear-gradient(135deg,#DCE6FD,#B6CAF6);border:1px solid #C3D3FA"></div>
<svg style="left:328px;top:561px" width="8" height="6" viewBox="0 0 8 6"><path d="M1 1 L4 4 L7 1" stroke="#4D6185" stroke-width="2" fill="none"/></svg>
<div class="ab" style="left:577px;top:77px;width:542px;height:1px;background:#ACA899"></div>
<div class="ab" style="left:351px;top:78px;width:768px;height:19px;background:#ECE9D8"></div>
<svg style="left:356px;top:77px" width="90" height="21" viewBox="0 0 90 21"><path d="M0.5 21 L0.5 6 Q0.5 0.5 6 0.5 L89.5 0.5 L89.5 21" fill="#ECE9D8" stroke="#ACA899"/></svg>
<div class="t" style="left:378px;top:83px;">Properties</div>
<svg style="left:490px;top:77px" width="88" height="21" viewBox="0 0 88 21"><path d="M0.5 21 L0.5 0.5 L80 0.5 Q87.5 0.5 87.5 8 L87.5 21" fill="#ECE9D8" stroke="#ACA899"/></svg>
<div class="t" style="left:531px;top:83px;">Diagram</div>
<svg style="left:444px;top:77px" width="76" height="21" viewBox="0 0 76 21"><path d="M0.5 21 L0.5 6 Q0.5 0.5 6 0.5 L44 0.5 C56 0.5 58 20.5 74 20.5 L74 21 Z" fill="#FFFFFF" stroke="#ACA899"/></svg>
<div class="t" style="left:467px;top:83px;">Data</div>
<svg style="left:362px;top:82px" width="13" height="11" viewBox="0 0 13 11"><rect x="0.5" y="0.5" width="12" height="10" fill="#F6F6F6" stroke="#6E6E6E"/><rect x="1" y="1" width="11" height="2" fill="#C8C8C8"/><path d="M1 4.5 H12 M1 6.5 H12 M1 8.5 H12 M4.5 3 V10" stroke="#A8B4C4"/></svg>
<div class="ab" style="left:351px;top:97px;width:768px;height:562px;background:#ECE9D8"></div>
<div class="ab" style="left:356px;top:97px;width:763px;height:1px;background:#ACA899"></div>
<div class="ab" style="left:357px;top:98px;width:762px;height:21px;background:linear-gradient(#F2F0E6,#ECE9D8)"></div>
<div class="ab" style="left:356px;top:119px;width:763px;height:1px;background:#A19E8E"></div>
<div class="ab" style="left:356px;top:97px;width:1px;height:562px;background:#ACA899"></div>
<div class="ab" style="left:489px;top:98px;width:1px;height:21px;background:#B8B5A6"></div>
<div class="ab" style="left:572px;top:98px;width:1px;height:21px;background:#B8B5A6"></div>
<div class="ab" style="left:643px;top:98px;width:1px;height:21px;background:#B8B5A6"></div>
<div class="ab" style="left:714px;top:98px;width:1px;height:21px;background:#B8B5A6"></div>
<div class="ab" style="left:912px;top:98px;width:1px;height:21px;background:#B8B5A6"></div>
<div class="ab" style="left:983px;top:98px;width:1px;height:21px;background:#B8B5A6"></div>
<div class="ab" style="left:1060px;top:98px;width:1px;height:21px;background:#B8B5A6"></div>
<div class="ab" style="left:1180px;top:98px;width:1px;height:21px;background:#B8B5A6"></div>
<div class="ab" style="left:358px;top:99px;width:48px;height:20px;border:1px solid #3D4E6B;border-radius:3px;background:linear-gradient(#FFFFFF,#F2F1EA 60%,#D9D7CC)"></div>
<div class="ab" style="left:407px;top:120px;width:712px;height:539px;background:#FFFFFF"></div>
<div class="ab" style="left:357px;top:120px;width:49px;height:539px;background:#ECE9D8"></div>
<div class="ab" style="left:406px;top:119px;width:1px;height:540px;background:#A19E8E"></div>
<div class="ab" style="left:357px;top:135px;width:49px;height:1px;background:#A8A595"></div>
<div class="ab" style="left:407px;top:135px;width:712px;height:1px;background:#ECEAE0"></div>
<div class="ab" style="left:357px;top:151px;width:49px;height:1px;background:#A8A595"></div>
<div class="ab" style="left:407px;top:151px;width:712px;height:1px;background:#ECEAE0"></div>
<div class="ab" style="left:357px;top:167px;width:49px;height:1px;background:#A8A595"></div>
<div class="ab" style="left:407px;top:167px;width:712px;height:1px;background:#ECEAE0"></div>
<div class="ab" style="left:357px;top:183px;width:49px;height:1px;background:#A8A595"></div>
<div class="ab" style="left:407px;top:183px;width:712px;height:1px;background:#ECEAE0"></div>
<div class="ab" style="left:357px;top:199px;width:49px;height:1px;background:#A8A595"></div>
<div class="ab" style="left:407px;top:199px;width:712px;height:1px;background:#ECEAE0"></div>
<div class="ab" style="left:357px;top:215px;width:49px;height:1px;background:#A8A595"></div>
<div class="ab" style="left:407px;top:215px;width:712px;height:1px;background:#ECEAE0"></div>
<div class="ab" style="left:357px;top:231px;width:49px;height:1px;background:#A8A595"></div>
<div class="ab" style="left:407px;top:231px;width:712px;height:1px;background:#ECEAE0"></div>
<div class="ab" style="left:357px;top:247px;width:49px;height:1px;background:#A8A595"></div>
<div class="ab" style="left:407px;top:247px;width:712px;height:1px;background:#ECEAE0"></div>
<div class="ab" style="left:357px;top:263px;width:49px;height:1px;background:#A8A595"></div>
<div class="ab" style="left:407px;top:263px;width:712px;height:1px;background:#ECEAE0"></div>
<div class="ab" style="left:357px;top:279px;width:49px;height:1px;background:#A8A595"></div>
<div class="ab" style="left:407px;top:279px;width:712px;height:1px;background:#ECEAE0"></div>
<div class="ab" style="left:357px;top:295px;width:49px;height:1px;background:#A8A595"></div>
<div class="ab" style="left:407px;top:295px;width:712px;height:1px;background:#ECEAE0"></div>
<div class="ab" style="left:357px;top:311px;width:49px;height:1px;background:#A8A595"></div>
<div class="ab" style="left:407px;top:311px;width:712px;height:1px;background:#ECEAE0"></div>
<div class="ab" style="left:357px;top:327px;width:49px;height:1px;background:#A8A595"></div>
<div class="ab" style="left:407px;top:327px;width:712px;height:1px;background:#ECEAE0"></div>
<div class="ab" style="left:357px;top:343px;width:49px;height:1px;background:#A8A595"></div>
<div class="ab" style="left:407px;top:343px;width:712px;height:1px;background:#ECEAE0"></div>
<div class="ab" style="left:357px;top:359px;width:49px;height:1px;background:#A8A595"></div>
<div class="ab" style="left:407px;top:359px;width:712px;height:1px;background:#ECEAE0"></div>
<div class="ab" style="left:357px;top:375px;width:49px;height:1px;background:#A8A595"></div>
<div class="ab" style="left:407px;top:375px;width:712px;height:1px;background:#ECEAE0"></div>
<div class="ab" style="left:357px;top:391px;width:49px;height:1px;background:#A8A595"></div>
<div class="ab" style="left:407px;top:391px;width:712px;height:1px;background:#ECEAE0"></div>
<div class="ab" style="left:357px;top:407px;width:49px;height:1px;background:#A8A595"></div>
<div class="ab" style="left:407px;top:407px;width:712px;height:1px;background:#ECEAE0"></div>
<div class="ab" style="left:357px;top:423px;width:49px;height:1px;background:#A8A595"></div>
<div class="ab" style="left:407px;top:423px;width:712px;height:1px;background:#ECEAE0"></div>
<div class="ab" style="left:357px;top:439px;width:49px;height:1px;background:#A8A595"></div>
<div class="ab" style="left:407px;top:439px;width:712px;height:1px;background:#ECEAE0"></div>
<div class="ab" style="left:357px;top:455px;width:49px;height:1px;background:#A8A595"></div>
<div class="ab" style="left:407px;top:455px;width:712px;height:1px;background:#ECEAE0"></div>
<div class="ab" style="left:357px;top:471px;width:49px;height:1px;background:#A8A595"></div>
<div class="ab" style="left:407px;top:471px;width:712px;height:1px;background:#ECEAE0"></div>
<div class="ab" style="left:357px;top:487px;width:49px;height:1px;background:#A8A595"></div>
<div class="ab" style="left:407px;top:487px;width:712px;height:1px;background:#ECEAE0"></div>
<div class="ab" style="left:357px;top:503px;width:49px;height:1px;background:#A8A595"></div>
<div class="ab" style="left:407px;top:503px;width:712px;height:1px;background:#ECEAE0"></div>
<div class="ab" style="left:357px;top:519px;width:49px;height:1px;background:#A8A595"></div>
<div class="ab" style="left:407px;top:519px;width:712px;height:1px;background:#ECEAE0"></div>
<div class="ab" style="left:357px;top:535px;width:49px;height:1px;background:#A8A595"></div>
<div class="ab" style="left:407px;top:535px;width:712px;height:1px;background:#ECEAE0"></div>
<div class="ab" style="left:357px;top:551px;width:49px;height:1px;background:#A8A595"></div>
<div class="ab" style="left:407px;top:551px;width:712px;height:1px;background:#ECEAE0"></div>
<div class="ab" style="left:357px;top:567px;width:49px;height:1px;background:#A8A595"></div>
<div class="ab" style="left:407px;top:567px;width:712px;height:1px;background:#ECEAE0"></div>
<div class="ab" style="left:357px;top:583px;width:49px;height:1px;background:#A8A595"></div>
<div class="ab" style="left:407px;top:583px;width:712px;height:1px;background:#ECEAE0"></div>
<div class="ab" style="left:357px;top:599px;width:49px;height:1px;background:#A8A595"></div>
<div class="ab" style="left:407px;top:599px;width:712px;height:1px;background:#ECEAE0"></div>
<div class="ab" style="left:357px;top:615px;width:49px;height:1px;background:#A8A595"></div>
<div class="ab" style="left:407px;top:615px;width:712px;height:1px;background:#ECEAE0"></div>
<div class="ab" style="left:357px;top:631px;width:49px;height:1px;background:#A8A595"></div>
<div class="ab" style="left:407px;top:631px;width:712px;height:1px;background:#ECEAE0"></div>
<div class="ab" style="left:357px;top:647px;width:49px;height:1px;background:#A8A595"></div>
<div class="ab" style="left:407px;top:647px;width:712px;height:1px;background:#ECEAE0"></div>
<div class="ab" style="left:489px;top:120px;width:1px;height:539px;background:#ECEAE0"></div>
<div class="ab" style="left:572px;top:120px;width:1px;height:539px;background:#ECEAE0"></div>
<div class="ab" style="left:643px;top:120px;width:1px;height:539px;background:#ECEAE0"></div>
<div class="ab" style="left:714px;top:120px;width:1px;height:539px;background:#ECEAE0"></div>
<div class="ab" style="left:912px;top:120px;width:1px;height:539px;background:#ECEAE0"></div>
<div class="ab" style="left:983px;top:120px;width:1px;height:539px;background:#ECEAE0"></div>
<div class="ab" style="left:1060px;top:120px;width:1px;height:539px;background:#ECEAE0"></div>
<div class="ab" style="left:1180px;top:120px;width:1px;height:539px;background:#ECEAE0"></div>
<div class="t" style="left:361px;top:122px;">1</div>
<div class="t" style="left:410px;top:121px;">7,369</div>
<div class="t" style="left:493px;top:121px;">SMITH</div>
<div class="t" style="left:576px;top:121px;">CLERK</div>
<div class="t" style="left:647px;top:121px;">7,902</div>
<div class="s" style="left:719.00px;top:121px;font-size:11px;letter-spacing:-0.1px">1980</div><svg style="left:743px;top:121px" width="11" height="11"><use href="#c_nian"/></svg><div class="s" style="left:755.00px;top:121px;font-size:11px;letter-spacing:-0.1px">12</div><svg style="left:767px;top:121px" width="11" height="11"><use href="#c_yue"/></svg><div class="s" style="left:779.00px;top:121px;font-size:11px;letter-spacing:-0.1px">17</div><svg style="left:791px;top:121px" width="11" height="11"><use href="#c_ri"/></svg><svg style="left:808px;top:121px" width="11" height="11"><use href="#c_shang"/></svg><svg style="left:820px;top:121px" width="11" height="11"><use href="#c_wu"/></svg><div class="s" style="left:832.00px;top:121px;font-size:11px;letter-spacing:-0.1px">12</div><svg style="left:844px;top:121px" width="11" height="11"><use href="#c_shi"/></svg><div class="s" style="left:856.00px;top:121px;font-size:11px;letter-spacing:-0.1px">00</div><svg style="left:868px;top:121px" width="11" height="11"><use href="#c_fen"/></svg><div class="s" style="left:880.00px;top:121px;font-size:11px;letter-spacing:-0.1px">00</div><svg style="left:892px;top:121px" width="11" height="11"><use href="#c_miao"/></svg>
<div class="t" style="left:916px;top:121px;">800</div>
<div class="t" style="left:987px;top:121px;color:#B4B4B4">[NULL]</div>
<div class="t" style="left:1064px;top:121px;">20</div>
<div class="t" style="left:361px;top:138px;">2</div>
<div class="t" style="left:410px;top:137px;">7,499</div>
<div class="t" style="left:493px;top:137px;">ALLEN</div>
<div class="t" style="left:576px;top:137px;">SALESMAN</div>
<div class="t" style="left:647px;top:137px;">7,698</div>
<div class="s" style="left:719.00px;top:137px;font-size:11px;letter-spacing:-0.1px">1981</div><svg style="left:743px;top:137px" width="11" height="11"><use href="#c_nian"/></svg><div class="s" style="left:755.00px;top:137px;font-size:11px;letter-spacing:-0.1px">2</div><svg style="left:761px;top:137px" width="11" height="11"><use href="#c_yue"/></svg><div class="s" style="left:773.00px;top:137px;font-size:11px;letter-spacing:-0.1px">20</div><svg style="left:785px;top:137px" width="11" height="11"><use href="#c_ri"/></svg><svg style="left:802px;top:137px" width="11" height="11"><use href="#c_shang"/></svg><svg style="left:814px;top:137px" width="11" height="11"><use href="#c_wu"/></svg><div class="s" style="left:826.00px;top:137px;font-size:11px;letter-spacing:-0.1px">12</div><svg style="left:838px;top:137px" width="11" height="11"><use href="#c_shi"/></svg><div class="s" style="left:850.00px;top:137px;font-size:11px;letter-spacing:-0.1px">00</div><svg style="left:862px;top:137px" width="11" height="11"><use href="#c_fen"/></svg><div class="s" style="left:874.00px;top:137px;font-size:11px;letter-spacing:-0.1px">00</div><svg style="left:886px;top:137px" width="11" height="11"><use href="#c_miao"/></svg>
<div class="t" style="left:916px;top:137px;">1,600</div>
<div class="t" style="left:987px;top:137px;">300</div>
<div class="t" style="left:1064px;top:137px;">30</div>
<div class="t" style="left:361px;top:154px;">3</div>
<div class="t" style="left:410px;top:153px;">7,521</div>
<div class="t" style="left:493px;top:153px;">WARD</div>
<div class="t" style="left:576px;top:153px;">SALESMAN</div>
<div class="t" style="left:647px;top:153px;">7,698</div>
<div class="s" style="left:719.00px;top:153px;font-size:11px;letter-spacing:-0.1px">1981</div><svg style="left:743px;top:153px" width="11" height="11"><use href="#c_nian"/></svg><div class="s" style="left:755.00px;top:153px;font-size:11px;letter-spacing:-0.1px">2</div><svg style="left:761px;top:153px" width="11" height="11"><use href="#c_yue"/></svg><div class="s" style="left:773.00px;top:153px;font-size:11px;letter-spacing:-0.1px">22</div><svg style="left:785px;top:153px" width="11" height="11"><use href="#c_ri"/></svg><svg style="left:802px;top:153px" width="11" height="11"><use href="#c_shang"/></svg><svg style="left:814px;top:153px" width="11" height="11"><use href="#c_wu"/></svg><div class="s" style="left:826.00px;top:153px;font-size:11px;letter-spacing:-0.1px">12</div><svg style="left:838px;top:153px" width="11" height="11"><use href="#c_shi"/></svg><div class="s" style="left:850.00px;top:153px;font-size:11px;letter-spacing:-0.1px">00</div><svg style="left:862px;top:153px" width="11" height="11"><use href="#c_fen"/></svg><div class="s" style="left:874.00px;top:153px;font-size:11px;letter-spacing:-0.1px">00</div><svg style="left:886px;top:153px" width="11" height="11"><use href="#c_miao"/></svg>
<div class="t" style="left:916px;top:153px;">1,250</div>
<div class="t" style="left:987px;top:153px;">500</div>
<div class="t" style="left:1064px;top:153px;">30</div>
<div class="t" style="left:361px;top:170px;">4</div>
<div class="t" style="left:410px;top:169px;">7,566</div>
<div class="t" style="left:493px;top:169px;">JONES</div>
<div class="t" style="left:576px;top:169px;">MANAGER</div>
<div class="t" style="left:647px;top:169px;">7,839</div>
<div class="s" style="left:719.00px;top:169px;font-size:11px;letter-spacing:-0.1px">1981</div><svg style="left:743px;top:169px" width="11" height="11"><use href="#c_nian"/></svg><div class="s" style="left:755.00px;top:169px;font-size:11px;letter-spacing:-0.1px">4</div><svg style="left:761px;top:169px" width="11" height="11"><use href="#c_yue"/></svg><div class="s" style="left:773.00px;top:169px;font-size:11px;letter-spacing:-0.1px">2</div><svg style="left:779px;top:169px" width="11" height="11"><use href="#c_ri"/></svg><svg style="left:796px;top:169px" width="11" height="11"><use href="#c_shang"/></svg><svg style="left:808px;top:169px" width="11" height="11"><use href="#c_wu"/></svg><div class="s" style="left:820.00px;top:169px;font-size:11px;letter-spacing:-0.1px">12</div><svg style="left:832px;top:169px" width="11" height="11"><use href="#c_shi"/></svg><div class="s" style="left:844.00px;top:169px;font-size:11px;letter-spacing:-0.1px">00</div><svg style="left:856px;top:169px" width="11" height="11"><use href="#c_fen"/></svg><div class="s" style="left:868.00px;top:169px;font-size:11px;letter-spacing:-0.1px">00</div><svg style="left:880px;top:169px" width="11" height="11"><use href="#c_miao"/></svg>
<div class="t" style="left:916px;top:169px;">2,975</div>
<div class="t" style="left:987px;top:169px;color:#B4B4B4">[NULL]</div>
<div class="t" style="left:1064px;top:169px;">20</div>
<div class="t" style="left:361px;top:186px;">5</div>
<div class="t" style="left:410px;top:185px;">7,654</div>
<div class="t" style="left:493px;top:185px;">MARTIN</div>
<div class="t" style="left:576px;top:185px;">SALESMAN</div>
<div class="t" style="left:647px;top:185px;">7,698</div>
<div class="s" style="left:719.00px;top:185px;font-size:11px;letter-spacing:-0.1px">1981</div><svg style="left:743px;top:185px" width="11" height="11"><use href="#c_nian"/></svg><div class="s" style="left:755.00px;top:185px;font-size:11px;letter-spacing:-0.1px">9</div><svg style="left:761px;top:185px" width="11" height="11"><use href="#c_yue"/></svg><div class="s" style="left:773.00px;top:185px;font-size:11px;letter-spacing:-0.1px">28</div><svg style="left:785px;top:185px" width="11" height="11"><use href="#c_ri"/></svg><svg style="left:802px;top:185px" width="11" height="11"><use href="#c_shang"/></svg><svg style="left:814px;top:185px" width="11" height="11"><use href="#c_wu"/></svg><div class="s" style="left:826.00px;top:185px;font-size:11px;letter-spacing:-0.1px">12</div><svg style="left:838px;top:185px" width="11" height="11"><use href="#c_shi"/></svg><div class="s" style="left:850.00px;top:185px;font-size:11px;letter-spacing:-0.1px">00</div><svg style="left:862px;top:185px" width="11" height="11"><use href="#c_fen"/></svg><div class="s" style="left:874.00px;top:185px;font-size:11px;letter-spacing:-0.1px">00</div><svg style="left:886px;top:185px" width="11" height="11"><use href="#c_miao"/></svg>
<div class="t" style="left:916px;top:185px;">1,250</div>
<div class="t" style="left:987px;top:185px;">1,400</div>
<div class="t" style="left:1064px;top:185px;">30</div>
<div class="t" style="left:361px;top:202px;">6</div>
<div class="t" style="left:410px;top:201px;">7,698</div>
<div class="t" style="left:493px;top:201px;">BLAKE</div>
<div class="t" style="left:576px;top:201px;">MANAGER</div>
<div class="t" style="left:647px;top:201px;">7,839</div>
<div class="s" style="left:719.00px;top:201px;font-size:11px;letter-spacing:-0.1px">1981</div><svg style="left:743px;top:201px" width="11" height="11"><use href="#c_nian"/></svg><div class="s" style="left:755.00px;top:201px;font-size:11px;letter-spacing:-0.1px">5</div><svg style="left:761px;top:201px" width="11" height="11"><use href="#c_yue"/></svg><div class="s" style="left:773.00px;top:201px;font-size:11px;letter-spacing:-0.1px">1</div><svg style="left:779px;top:201px" width="11" height="11"><use href="#c_ri"/></svg><svg style="left:796px;top:201px" width="11" height="11"><use href="#c_shang"/></svg><svg style="left:808px;top:201px" width="11" height="11"><use href="#c_wu"/></svg><div class="s" style="left:820.00px;top:201px;font-size:11px;letter-spacing:-0.1px">12</div><svg style="left:832px;top:201px" width="11" height="11"><use href="#c_shi"/></svg><div class="s" style="left:844.00px;top:201px;font-size:11px;letter-spacing:-0.1px">00</div><svg style="left:856px;top:201px" width="11" height="11"><use href="#c_fen"/></svg><div class="s" style="left:868.00px;top:201px;font-size:11px;letter-spacing:-0.1px">00</div><svg style="left:880px;top:201px" width="11" height="11"><use href="#c_miao"/></svg>
<div class="t" style="left:916px;top:201px;">2,850</div>
<div class="t" style="left:987px;top:201px;color:#B4B4B4">[NULL]</div>
<div class="t" style="left:1064px;top:201px;">30</div>
<div class="t" style="left:361px;top:218px;">7</div>
<div class="t" style="left:410px;top:217px;">7,782</div>
<div class="t" style="left:493px;top:217px;">CLARK</div>
<div class="t" style="left:576px;top:217px;">MANAGER</div>
<div class="t" style="left:647px;top:217px;">7,839</div>
<div class="s" style="left:719.00px;top:217px;font-size:11px;letter-spacing:-0.1px">1981</div><svg style="left:743px;top:217px" width="11" height="11"><use href="#c_nian"/></svg><div class="s" style="left:755.00px;top:217px;font-size:11px;letter-spacing:-0.1px">6</div><svg style="left:761px;top:217px" width="11" height="11"><use href="#c_yue"/></svg><div class="s" style="left:773.00px;top:217px;font-size:11px;letter-spacing:-0.1px">9</div><svg style="left:779px;top:217px" width="11" height="11"><use href="#c_ri"/></svg><svg style="left:796px;top:217px" width="11" height="11"><use href="#c_shang"/></svg><svg style="left:808px;top:217px" width="11" height="11"><use href="#c_wu"/></svg><div class="s" style="left:820.00px;top:217px;font-size:11px;letter-spacing:-0.1px">12</div><svg style="left:832px;top:217px" width="11" height="11"><use href="#c_shi"/></svg><div class="s" style="left:844.00px;top:217px;font-size:11px;letter-spacing:-0.1px">00</div><svg style="left:856px;top:217px" width="11" height="11"><use href="#c_fen"/></svg><div class="s" style="left:868.00px;top:217px;font-size:11px;letter-spacing:-0.1px">00</div><svg style="left:880px;top:217px" width="11" height="11"><use href="#c_miao"/></svg>
<div class="t" style="left:916px;top:217px;">2,450</div>
<div class="t" style="left:987px;top:217px;color:#B4B4B4">[NULL]</div>
<div class="t" style="left:1064px;top:217px;">10</div>
<div class="t" style="left:361px;top:234px;">8</div>
<div class="t" style="left:410px;top:233px;">7,788</div>
<div class="t" style="left:493px;top:233px;">SCOTT</div>
<div class="t" style="left:576px;top:233px;">ANALYST</div>
<div class="t" style="left:647px;top:233px;">7,566</div>
<div class="s" style="left:719.00px;top:233px;font-size:11px;letter-spacing:-0.1px">1982</div><svg style="left:743px;top:233px" width="11" height="11"><use href="#c_nian"/></svg><div class="s" style="left:755.00px;top:233px;font-size:11px;letter-spacing:-0.1px">12</div><svg style="left:767px;top:233px" width="11" height="11"><use href="#c_yue"/></svg><div class="s" style="left:779.00px;top:233px;font-size:11px;letter-spacing:-0.1px">9</div><svg style="left:785px;top:233px" width="11" height="11"><use href="#c_ri"/></svg><svg style="left:802px;top:233px" width="11" height="11"><use href="#c_shang"/></svg><svg style="left:814px;top:233px" width="11" height="11"><use href="#c_wu"/></svg><div class="s" style="left:826.00px;top:233px;font-size:11px;letter-spacing:-0.1px">12</div><svg style="left:838px;top:233px" width="11" height="11"><use href="#c_shi"/></svg><div class="s" style="left:850.00px;top:233px;font-size:11px;letter-spacing:-0.1px">00</div><svg style="left:862px;top:233px" width="11" height="11"><use href="#c_fen"/></svg><div class="s" style="left:874.00px;top:233px;font-size:11px;letter-spacing:-0.1px">00</div><svg style="left:886px;top:233px" width="11" height="11"><use href="#c_miao"/></svg>
<div class="t" style="left:916px;top:233px;">3,000</div>
<div class="t" style="left:987px;top:233px;color:#B4B4B4">[NULL]</div>
<div class="t" style="left:1064px;top:233px;">20</div>
<div class="t" style="left:361px;top:250px;">9</div>
<div class="t" style="left:410px;top:249px;">7,839</div>
<div class="t" style="left:493px;top:249px;">KING</div>
<div class="t" style="left:576px;top:249px;">PRESIDENT</div>
<div class="t" style="left:647px;top:249px;color:#B4B4B4">[NULL]</div>
<div class="s" style="left:719.00px;top:249px;font-size:11px;letter-spacing:-0.1px">1981</div><svg style="left:743px;top:249px" width="11" height="11"><use href="#c_nian"/></svg><div class="s" style="left:755.00px;top:249px;font-size:11px;letter-spacing:-0.1px">11</div><svg style="left:767px;top:249px" width="11" height="11"><use href="#c_yue"/></svg><div class="s" style="left:779.00px;top:249px;font-size:11px;letter-spacing:-0.1px">17</div><svg style="left:791px;top:249px" width="11" height="11"><use href="#c_ri"/></svg><svg style="left:808px;top:249px" width="11" height="11"><use href="#c_shang"/></svg><svg style="left:820px;top:249px" width="11" height="11"><use href="#c_wu"/></svg><div class="s" style="left:832.00px;top:249px;font-size:11px;letter-spacing:-0.1px">12</div><svg style="left:844px;top:249px" width="11" height="11"><use href="#c_shi"/></svg><div class="s" style="left:856.00px;top:249px;font-size:11px;letter-spacing:-0.1px">00</div><svg style="left:868px;top:249px" width="11" height="11"><use href="#c_fen"/></svg><div class="s" style="left:880.00px;top:249px;font-size:11px;letter-spacing:-0.1px">00</div><svg style="left:892px;top:249px" width="11" height="11"><use href="#c_miao"/></svg>
<div class="t" style="left:916px;top:249px;">5,000</div>
<div class="t" style="left:987px;top:249px;color:#B4B4B4">[NULL]</div>
<div class="t" style="left:1064px;top:249px;">10</div>
<div class="t" style="left:361px;top:266px;">10</div>
<div class="t" style="left:410px;top:265px;">7,844</div>
<div class="t" style="left:493px;top:265px;">TURNER</div>
<div class="t" style="left:576px;top:265px;">SALESMAN</div>
<div class="t" style="left:647px;top:265px;">7,698</div>
<div class="s" style="left:719.00px;top:265px;font-size:11px;letter-spacing:-0.1px">1981</div><svg style="left:743px;top:265px" width="11" height="11"><use href="#c_nian"/></svg><div class="s" style="left:755.00px;top:265px;font-size:11px;letter-spacing:-0.1px">9</div><svg style="left:761px;top:265px" width="11" height="11"><use href="#c_yue"/></svg><div class="s" style="left:773.00px;top:265px;font-size:11px;letter-spacing:-0.1px">8</div><svg style="left:779px;top:265px" width="11" height="11"><use href="#c_ri"/></svg><svg style="left:796px;top:265px" width="11" height="11"><use href="#c_shang"/></svg><svg style="left:808px;top:265px" width="11" height="11"><use href="#c_wu"/></svg><div class="s" style="left:820.00px;top:265px;font-size:11px;letter-spacing:-0.1px">12</div><svg style="left:832px;top:265px" width="11" height="11"><use href="#c_shi"/></svg><div class="s" style="left:844.00px;top:265px;font-size:11px;letter-spacing:-0.1px">00</div><svg style="left:856px;top:265px" width="11" height="11"><use href="#c_fen"/></svg><div class="s" style="left:868.00px;top:265px;font-size:11px;letter-spacing:-0.1px">00</div><svg style="left:880px;top:265px" width="11" height="11"><use href="#c_miao"/></svg>
<div class="t" style="left:916px;top:265px;">1,500</div>
<div class="t" style="left:987px;top:265px;">0</div>
<div class="t" style="left:1064px;top:265px;">30</div>
<div class="t" style="left:361px;top:282px;">11</div>
<div class="t" style="left:410px;top:281px;">7,876</div>
<div class="t" style="left:493px;top:281px;">ADAMS</div>
<div class="t" style="left:576px;top:281px;">CLERK</div>
<div class="t" style="left:647px;top:281px;">7,788</div>
<div class="s" style="left:719.00px;top:281px;font-size:11px;letter-spacing:-0.1px">1983</div><svg style="left:743px;top:281px" width="11" height="11"><use href="#c_nian"/></svg><div class="s" style="left:755.00px;top:281px;font-size:11px;letter-spacing:-0.1px">12</div><svg style="left:767px;top:281px" width="11" height="11"><use href="#c_yue"/></svg><div class="s" style="left:779.00px;top:281px;font-size:11px;letter-spacing:-0.1px">1</div><svg style="left:785px;top:281px" width="11" height="11"><use href="#c_ri"/></svg><svg style="left:802px;top:281px" width="11" height="11"><use href="#c_shang"/></svg><svg style="left:814px;top:281px" width="11" height="11"><use href="#c_wu"/></svg><div class="s" style="left:826.00px;top:281px;font-size:11px;letter-spacing:-0.1px">12</div><svg style="left:838px;top:281px" width="11" height="11"><use href="#c_shi"/></svg><div class="s" style="left:850.00px;top:281px;font-size:11px;letter-spacing:-0.1px">00</div><svg style="left:862px;top:281px" width="11" height="11"><use href="#c_fen"/></svg><div class="s" style="left:874.00px;top:281px;font-size:11px;letter-spacing:-0.1px">00</div><svg style="left:886px;top:281px" width="11" height="11"><use href="#c_miao"/></svg>
<div class="t" style="left:916px;top:281px;">1,100</div>
<div class="t" style="left:987px;top:281px;color:#B4B4B4">[NULL]</div>
<div class="t" style="left:1064px;top:281px;">20</div>
<div class="t" style="left:361px;top:298px;">12</div>
<div class="t" style="left:410px;top:297px;">7,902</div>
<div class="t" style="left:493px;top:297px;">FORD</div>
<div class="t" style="left:576px;top:297px;">ANALYST</div>
<div class="t" style="left:647px;top:297px;">7,566</div>
<div class="s" style="left:719.00px;top:297px;font-size:11px;letter-spacing:-0.1px">1981</div><svg style="left:743px;top:297px" width="11" height="11"><use href="#c_nian"/></svg><div class="s" style="left:755.00px;top:297px;font-size:11px;letter-spacing:-0.1px">12</div><svg style="left:767px;top:297px" width="11" height="11"><use href="#c_yue"/></svg><div class="s" style="left:779.00px;top:297px;font-size:11px;letter-spacing:-0.1px">3</div><svg style="left:785px;top:297px" width="11" height="11"><use href="#c_ri"/></svg><svg style="left:802px;top:297px" width="11" height="11"><use href="#c_shang"/></svg><svg style="left:814px;top:297px" width="11" height="11"><use href="#c_wu"/></svg><div class="s" style="left:826.00px;top:297px;font-size:11px;letter-spacing:-0.1px">12</div><svg style="left:838px;top:297px" width="11" height="11"><use href="#c_shi"/></svg><div class="s" style="left:850.00px;top:297px;font-size:11px;letter-spacing:-0.1px">00</div><svg style="left:862px;top:297px" width="11" height="11"><use href="#c_fen"/></svg><div class="s" style="left:874.00px;top:297px;font-size:11px;letter-spacing:-0.1px">00</div><svg style="left:886px;top:297px" width="11" height="11"><use href="#c_miao"/></svg>
<div class="t" style="left:916px;top:297px;">3,000</div>
<div class="t" style="left:987px;top:297px;color:#B4B4B4">[NULL]</div>
<div class="t" style="left:1064px;top:297px;">20</div>
<div class="t" style="left:361px;top:314px;">13</div>
<div class="t" style="left:410px;top:313px;">7,934</div>
<div class="t" style="left:493px;top:313px;">MILLER</div>
<div class="t" style="left:576px;top:313px;">CLERK</div>
<div class="t" style="left:647px;top:313px;">7,782</div>
<div class="s" style="left:719.00px;top:313px;font-size:11px;letter-spacing:-0.1px">1982</div><svg style="left:743px;top:313px" width="11" height="11"><use href="#c_nian"/></svg><div class="s" style="left:755.00px;top:313px;font-size:11px;letter-spacing:-0.1px">1</div><svg style="left:761px;top:313px" width="11" height="11"><use href="#c_yue"/></svg><div class="s" style="left:773.00px;top:313px;font-size:11px;letter-spacing:-0.1px">23</div><svg style="left:785px;top:313px" width="11" height="11"><use href="#c_ri"/></svg><svg style="left:802px;top:313px" width="11" height="11"><use href="#c_shang"/></svg><svg style="left:814px;top:313px" width="11" height="11"><use href="#c_wu"/></svg><div class="s" style="left:826.00px;top:313px;font-size:11px;letter-spacing:-0.1px">12</div><svg style="left:838px;top:313px" width="11" height="11"><use href="#c_shi"/></svg><div class="s" style="left:850.00px;top:313px;font-size:11px;letter-spacing:-0.1px">00</div><svg style="left:862px;top:313px" width="11" height="11"><use href="#c_fen"/></svg><div class="s" style="left:874.00px;top:313px;font-size:11px;letter-spacing:-0.1px">00</div><svg style="left:886px;top:313px" width="11" height="11"><use href="#c_miao"/></svg>
<div class="t" style="left:916px;top:313px;">1,300</div>
<div class="t" style="left:987px;top:313px;color:#B4B4B4">[NULL]</div>
<div class="t" style="left:1064px;top:313px;">10</div>
<div class="t" style="left:361px;top:330px;">14</div>
<div class="t" style="left:410px;top:329px;">8,000</div>
<div class="t" style="left:493px;top:329px;">Johannes</div>
<div class="t" style="left:576px;top:329px;">DEVELOPER</div>
<div class="t" style="left:647px;top:329px;">7,839</div>
<div class="s" style="left:719.00px;top:329px;font-size:11px;letter-spacing:-0.1px">2002</div><svg style="left:743px;top:329px" width="11" height="11"><use href="#c_nian"/></svg><div class="s" style="left:755.00px;top:329px;font-size:11px;letter-spacing:-0.1px">5</div><svg style="left:761px;top:329px" width="11" height="11"><use href="#c_yue"/></svg><div class="s" style="left:773.00px;top:329px;font-size:11px;letter-spacing:-0.1px">17</div><svg style="left:785px;top:329px" width="11" height="11"><use href="#c_ri"/></svg><svg style="left:802px;top:329px" width="11" height="11"><use href="#c_shang"/></svg><svg style="left:814px;top:329px" width="11" height="11"><use href="#c_wu"/></svg><div class="s" style="left:826.00px;top:329px;font-size:11px;letter-spacing:-0.1px">12</div><svg style="left:838px;top:329px" width="11" height="11"><use href="#c_shi"/></svg><div class="s" style="left:850.00px;top:329px;font-size:11px;letter-spacing:-0.1px">00</div><svg style="left:862px;top:329px" width="11" height="11"><use href="#c_fen"/></svg><div class="s" style="left:874.00px;top:329px;font-size:11px;letter-spacing:-0.1px">00</div><svg style="left:886px;top:329px" width="11" height="11"><use href="#c_miao"/></svg>
<div class="t" style="left:916px;top:329px;">1,000</div>
<div class="t" style="left:987px;top:329px;color:#B4B4B4">[NULL]</div>
<div class="t" style="left:1064px;top:329px;">20</div>
<div class="t" style="left:361px;top:346px;">15</div>
<div class="t" style="left:410px;top:345px;">8,001</div>
<div class="t" style="left:493px;top:345px;">Jothy</div>
<div class="t" style="left:576px;top:345px;">MANAGER</div>
<div class="t" style="left:647px;top:345px;">7,839</div>
<div class="s" style="left:719.00px;top:345px;font-size:11px;letter-spacing:-0.1px">2001</div><svg style="left:743px;top:345px" width="11" height="11"><use href="#c_nian"/></svg><div class="s" style="left:755.00px;top:345px;font-size:11px;letter-spacing:-0.1px">1</div><svg style="left:761px;top:345px" width="11" height="11"><use href="#c_yue"/></svg><div class="s" style="left:773.00px;top:345px;font-size:11px;letter-spacing:-0.1px">9</div><svg style="left:779px;top:345px" width="11" height="11"><use href="#c_ri"/></svg><svg style="left:796px;top:345px" width="11" height="11"><use href="#c_shang"/></svg><svg style="left:808px;top:345px" width="11" height="11"><use href="#c_wu"/></svg><div class="s" style="left:820.00px;top:345px;font-size:11px;letter-spacing:-0.1px">12</div><svg style="left:832px;top:345px" width="11" height="11"><use href="#c_shi"/></svg><div class="s" style="left:844.00px;top:345px;font-size:11px;letter-spacing:-0.1px">00</div><svg style="left:856px;top:345px" width="11" height="11"><use href="#c_fen"/></svg><div class="s" style="left:868.00px;top:345px;font-size:11px;letter-spacing:-0.1px">00</div><svg style="left:880px;top:345px" width="11" height="11"><use href="#c_miao"/></svg>
<div class="t" style="left:916px;top:345px;">3,000</div>
<div class="t" style="left:987px;top:345px;">200</div>
<div class="t" style="left:1064px;top:345px;">20</div>
<div class="t" style="left:361px;top:362px;">16</div>
<div class="t" style="left:410px;top:361px;">8,002</div>
<div class="t" style="left:493px;top:361px;color:#B4B4B4">[NULL]</div>
<div class="t" style="left:576px;top:361px;color:#B4B4B4">[NULL]</div>
<div class="t" style="left:647px;top:361px;">7,839</div>
<div class="t" style="left:718px;top:361px;color:#B4B4B4">[NULL]</div>
<div class="t" style="left:916px;top:361px;color:#B4B4B4">[NULL]</div>
<div class="t" style="left:987px;top:361px;color:#B4B4B4">[NULL]</div>
<div class="t" style="left:1064px;top:361px;">20</div>
<div class="ab" style="left:357px;top:659px;width:762px;height:12px;background:#FBFBF8"></div>
<div class="ab" style="left:357px;top:660px;width:15px;height:11px;border-radius:2px;background:linear-gradient(135deg,#DCE6FD,#B6CAF6);border:1px solid #C3D3FA"></div>
<div class="ab" style="left:375px;top:660px;width:345px;height:11px;border-radius:2px;background:linear-gradient(#CAD8FC,#B7CBF8);border:1px solid #A8BCEB"></div>
<svg style="left:361px;top:662px" width="7" height="9" viewBox="0 0 7 9"><path d="M5 1 L2 4.5 L5 8" stroke="#4D6185" stroke-width="2" fill="none"/></svg>
<div class="ab" style="left:544px;top:664px;width:1px;height:6px;background:#EEF3FE"></div>
<div class="ab" style="left:546px;top:664px;width:1px;height:6px;background:#EEF3FE"></div>
<div class="ab" style="left:548px;top:664px;width:1px;height:6px;background:#EEF3FE"></div>
<div class="ab" style="left:550px;top:664px;width:1px;height:6px;background:#EEF3FE"></div>
<svg style="left:415px;top:103px" width="14" height="15" viewBox="0 0 14 15"><path d="M1.5 4.5 V1.5 H10.5 V4.5" fill="none" stroke="#6A7EA6" stroke-width="1"/><rect x="5" y="0" width="2" height="2" fill="#6A7EA6"/><path d="M1.5 8 L3.5 6.5 V13 M7.5 8 L9.5 6.5 V13" fill="none" stroke="#3F5585" stroke-width="1.6"/><rect x="5" y="11.5" width="1.6" height="1.6" fill="#3F5585"/><circle cx="10.5" cy="8.5" r="2.6" fill="#F8D77A" stroke="#C0902A"/><path d="M10.5 11 V14.5 M10.5 13 H12" stroke="#C0902A" stroke-width="1.3"/></svg>
<div class="t" style="left:433px;top:106px;">empno</div>
<svg style="left:469px;top:103px" width="16" height="15" viewBox="0 0 16 15"><path d="M2.5 0.5 L6.5 0.5 L6.5 4.5 L9 4.5 L4.5 9.5 L0 4.5 L2.5 4.5 Z" fill="#FDE9A8" stroke="#D3A02C"/><path d="M9.5 14.5 L13.5 14.5 L13.5 10.5 L16 10.5 L11.5 5.5 L7 10.5 L9.5 10.5 Z" fill="#FDE9A8" stroke="#D3A02C"/></svg>
<svg style="left:497px;top:104px" width="13" height="13" viewBox="0 0 13 13"><rect x="0.5" y="0.5" width="12" height="12" fill="#E8EEF8" stroke="#6F84A8"/><path d="M3 3 L10 3 M6.5 3 L6.5 10 M5 10 L8 10" stroke="#1A2A50" stroke-width="1.3" fill="none"/></svg>
<div class="t" style="left:517px;top:106px;">ename</div>
<svg style="left:551px;top:103px" width="16" height="15" viewBox="0 0 16 15"><path d="M2.5 0.5 L6.5 0.5 L6.5 4.5 L9 4.5 L4.5 9.5 L0 4.5 L2.5 4.5 Z" fill="#FDE9A8" stroke="#D3A02C"/><path d="M9.5 14.5 L13.5 14.5 L13.5 10.5 L16 10.5 L11.5 5.5 L7 10.5 L9.5 10.5 Z" fill="#FDE9A8" stroke="#D3A02C"/></svg>
<svg style="left:581px;top:104px" width="13" height="13" viewBox="0 0 13 13"><rect x="0.5" y="0.5" width="12" height="12" fill="#E8EEF8" stroke="#6F84A8"/><path d="M3 3 L10 3 M6.5 3 L6.5 10 M5 10 L8 10" stroke="#1A2A50" stroke-width="1.3" fill="none"/></svg>
<div class="t" style="left:598px;top:106px;">job</div>
<svg style="left:622px;top:103px" width="16" height="15" viewBox="0 0 16 15"><path d="M2.5 0.5 L6.5 0.5 L6.5 4.5 L9 4.5 L4.5 9.5 L0 4.5 L2.5 4.5 Z" fill="#FDE9A8" stroke="#D3A02C"/><path d="M9.5 14.5 L13.5 14.5 L13.5 10.5 L16 10.5 L11.5 5.5 L7 10.5 L9.5 10.5 Z" fill="#FDE9A8" stroke="#D3A02C"/></svg>
<svg style="left:652px;top:103px" width="14" height="15" viewBox="0 0 14 15"><path d="M1.5 4.5 V1.5 H10.5 V4.5" fill="none" stroke="#6A7EA6" stroke-width="1"/><rect x="5" y="0" width="2" height="2" fill="#6A7EA6"/><path d="M1.5 8 L3.5 6.5 V13 M7.5 8 L9.5 6.5 V13" fill="none" stroke="#3F5585" stroke-width="1.6"/><rect x="5" y="11.5" width="1.6" height="1.6" fill="#3F5585"/></svg>
<div class="t" style="left:668px;top:106px;">mgr</div>
<svg style="left:693px;top:103px" width="16" height="15" viewBox="0 0 16 15"><path d="M2.5 0.5 L6.5 0.5 L6.5 4.5 L9 4.5 L4.5 9.5 L0 4.5 L2.5 4.5 Z" fill="#FDE9A8" stroke="#D3A02C"/><path d="M9.5 14.5 L13.5 14.5 L13.5 10.5 L16 10.5 L11.5 5.5 L7 10.5 L9.5 10.5 Z" fill="#FDE9A8" stroke="#D3A02C"/></svg>
<svg style="left:721px;top:102px" width="16" height="14" viewBox="0 0 16 14"><rect x="0.5" y="3.5" width="10" height="10" fill="#E8EEF8" stroke="#6F84A8"/><rect x="1" y="4" width="9" height="2" fill="#7F95BE"/><text x="2" y="12.5" font-family="Liberation Sans" font-size="6" fill="#2A3A60">12</text><circle cx="11" cy="5" r="4.5" fill="#FFFFFF" stroke="#6F84A8"/><path d="M11 2.5 L11 5 L13 5" stroke="#2A3A60" fill="none"/></svg>
<div class="t" style="left:740px;top:106px;">hiredate</div>
<svg style="left:892px;top:103px" width="16" height="15" viewBox="0 0 16 15"><path d="M2.5 0.5 L6.5 0.5 L6.5 4.5 L9 4.5 L4.5 9.5 L0 4.5 L2.5 4.5 Z" fill="#FDE9A8" stroke="#D3A02C"/><path d="M9.5 14.5 L13.5 14.5 L13.5 10.5 L16 10.5 L11.5 5.5 L7 10.5 L9.5 10.5 Z" fill="#FDE9A8" stroke="#D3A02C"/></svg>
<svg style="left:921px;top:103px" width="14" height="15" viewBox="0 0 14 15"><path d="M1.5 4.5 V1.5 H10.5 V4.5" fill="none" stroke="#6A7EA6" stroke-width="1"/><rect x="5" y="0" width="2" height="2" fill="#6A7EA6"/><path d="M1.5 8 L3.5 6.5 V13 M7.5 8 L9.5 6.5 V13" fill="none" stroke="#3F5585" stroke-width="1.6"/><rect x="5" y="11.5" width="1.6" height="1.6" fill="#3F5585"/></svg>
<div class="t" style="left:938px;top:106px;">sal</div>
<svg style="left:962px;top:103px" width="16" height="15" viewBox="0 0 16 15"><path d="M2.5 0.5 L6.5 0.5 L6.5 4.5 L9 4.5 L4.5 9.5 L0 4.5 L2.5 4.5 Z" fill="#FDE9A8" stroke="#D3A02C"/><path d="M9.5 14.5 L13.5 14.5 L13.5 10.5 L16 10.5 L11.5 5.5 L7 10.5 L9.5 10.5 Z" fill="#FDE9A8" stroke="#D3A02C"/></svg>
<svg style="left:992px;top:103px" width="14" height="15" viewBox="0 0 14 15"><path d="M1.5 4.5 V1.5 H10.5 V4.5" fill="none" stroke="#6A7EA6" stroke-width="1"/><rect x="5" y="0" width="2" height="2" fill="#6A7EA6"/><path d="M1.5 8 L3.5 6.5 V13 M7.5 8 L9.5 6.5 V13" fill="none" stroke="#3F5585" stroke-width="1.6"/><rect x="5" y="11.5" width="1.6" height="1.6" fill="#3F5585"/></svg>
<div class="t" style="left:1009px;top:106px;">comm</div>
<svg style="left:1040px;top:103px" width="16" height="15" viewBox="0 0 16 15"><path d="M2.5 0.5 L6.5 0.5 L6.5 4.5 L9 4.5 L4.5 9.5 L0 4.5 L2.5 4.5 Z" fill="#FDE9A8" stroke="#D3A02C"/><path d="M9.5 14.5 L13.5 14.5 L13.5 10.5 L16 10.5 L11.5 5.5 L7 10.5 L9.5 10.5 Z" fill="#FDE9A8" stroke="#D3A02C"/></svg>
<svg style="left:1069px;top:103px" width="14" height="15" viewBox="0 0 14 15"><path d="M1.5 4.5 V1.5 H10.5 V4.5" fill="none" stroke="#6A7EA6" stroke-width="1"/><rect x="5" y="0" width="2" height="2" fill="#6A7EA6"/><path d="M1.5 8 L3.5 6.5 V13 M7.5 8 L9.5 6.5 V13" fill="none" stroke="#3F5585" stroke-width="1.6"/><rect x="5" y="11.5" width="1.6" height="1.6" fill="#3F5585"/></svg>
<div class="t" style="left:1086px;top:106px;">deptno</div>
<svg style="left:373px;top:101px" width="20" height="17" viewBox="0 0 20 17"><path d="M2 3.5 L9 3.5 M7 1.5 L9 3.5 L7 5.5 M11 0.5 L11 6.5" stroke="#40506E" fill="none"/><path d="M2 13.5 L9 13.5 M7 11.5 L9 13.5 L7 15.5 M11 10.5 L11 16.5" stroke="#40506E" fill="none"/><path d="M4 6.5 L11 6.5 L11 4.5 L16 8.5 L11 12.5 L11 10.5 L4 10.5 Z" fill="#FBD872" stroke="#D29A2A"/></svg>
<svg style="left:354px;top:52px" width="13" height="11" viewBox="0 0 13 11"><rect x="0.5" y="0.5" width="12" height="10" fill="#FFFFFF" stroke="#6F7785"/><rect x="1" y="1" width="11" height="2" fill="#9AA3B2"/><line x1="1" y1="5.5" x2="12" y2="5.5" stroke="#B3BCCB" stroke-width="1"/><line x1="1" y1="7.5" x2="12" y2="7.5" stroke="#B3BCCB" stroke-width="1"/><line x1="1" y1="9.5" x2="12" y2="9.5" stroke="#B3BCCB" stroke-width="1"/><line x1="4.5" y1="3" x2="4.5" y2="10" stroke="#B3BCCB"/></svg>
<svg style="left:518px;top:52px" width="13" height="11" viewBox="0 0 13 11"><rect x="0.5" y="0.5" width="12" height="10" fill="#FFFFFF" stroke="#6F7785"/><rect x="1" y="1" width="11" height="2" fill="#9AA3B2"/><line x1="1" y1="5.5" x2="12" y2="5.5" stroke="#B3BCCB" stroke-width="1"/><line x1="1" y1="7.5" x2="12" y2="7.5" stroke="#B3BCCB" stroke-width="1"/><line x1="1" y1="9.5" x2="12" y2="9.5" stroke="#B3BCCB" stroke-width="1"/><line x1="4.5" y1="3" x2="4.5" y2="10" stroke="#B3BCCB"/></svg>
<svg style="left:645px;top:52px" width="12" height="12" viewBox="0 0 12 12"><path d="M2 2 L10 10 M10 2 L2 10" stroke="#3A4A70" stroke-width="4.2" stroke-linecap="square"/><path d="M2 2 L10 10 M10 2 L2 10" stroke="#FFFFFF" stroke-width="2.4" stroke-linecap="square"/></svg>
<svg style="left:449px;top:80px" width="13" height="16" viewBox="0 0 13 16"><path d="M0.5 0.5 L8.5 0.5 L12.5 4.5 L12.5 15.5 L0.5 15.5 Z" fill="#D5E3F6" stroke="#6F94C8"/><rect x="2" y="11" width="9" height="2" fill="#8DB0DE"/></svg>
<svg style="left:511px;top:80px" width="17" height="17" viewBox="0 0 17 17"><rect x="5.5" y="0.5" width="5" height="6" fill="#fff" stroke="#B5B5B0"/><path d="M8 7 L8 9 M3 9 L13 9 M3 9 L3 11 M8 9 L8 11 M13 9 L13 11" stroke="#B5B5B0"/><rect x="0.5" y="11.5" width="4" height="5" fill="#fff" stroke="#B5B5B0"/><rect x="6" y="11.5" width="4" height="5" fill="#fff" stroke="#B5B5B0"/><rect x="11.5" y="11.5" width="4" height="5" fill="#fff" stroke="#B5B5B0"/></svg>
<svg style="left:-2px;top:49px" width="18" height="17" viewBox="0 0 18 17"><defs><linearGradient id="dbg" x1="0" y1="0" x2="1" y2="0"><stop offset="0" stop-color="#FBE9A8"/><stop offset="0.6" stop-color="#F2C640"/><stop offset="1" stop-color="#D9A520"/></linearGradient></defs><path d="M0.5 2.5 L0.5 11 Q4.5 13 8.5 11 L8.5 2.5" fill="url(#dbg)" stroke="#A88520"/><ellipse cx="4.5" cy="2.5" rx="4" ry="1.8" fill="#FCEFB8" stroke="#A88520"/><path d="M9.5 4.5 L9.5 13 Q13 15 16.5 13 L16.5 4.5" fill="url(#dbg)" stroke="#A88520"/><ellipse cx="13" cy="4.5" rx="3.5" ry="1.6" fill="#FCEFB8" stroke="#A88520"/><path d="M4.5 6.5 L4.5 15 Q8.5 17 12.5 15 L12.5 6.5" fill="url(#dbg)" stroke="#8A6A10"/><ellipse cx="8.5" cy="6.5" rx="4" ry="1.8" fill="#FCEFB8" stroke="#8A6A10"/></svg>
<svg style="left:134px;top:52px" width="12" height="12" viewBox="0 0 12 12"><path d="M3 3 L9 9 M9 3 L3 9" stroke="#6A6A62" stroke-width="3.6" stroke-linecap="square"/><path d="M3 3 L9 9 M9 3 L3 9" stroke="#FFFFFF" stroke-width="1.8" stroke-linecap="square"/></svg>
<svg style="left:157px;top:50px" width="16" height="15" viewBox="0 0 16 15"><rect x="0.5" y="0.5" width="11" height="9" fill="#E3ECF8" stroke="#6F94C8"/><rect x="1" y="1" width="10" height="2" fill="#7FA3D8"/><rect x="3.5" y="4.5" width="12" height="10" fill="#F3F7FC" stroke="#6F94C8"/><rect x="4" y="5" width="11" height="2" fill="#7FA3D8"/></svg>
<svg style="left:183px;top:76px" width="15" height="15" viewBox="0 0 15 15"><path d="M0.5 3 L0.5 11 Q5 14 9.5 11 L9.5 3" fill="#EDEDED" stroke="#9A9A9A"/><ellipse cx="5" cy="3" rx="4.5" ry="2.2" fill="#FAFAFA" stroke="#9A9A9A"/><circle cx="11" cy="11" r="3.5" fill="#B8B8B8" stroke="#6A6A6A" stroke-width="1.5" stroke-dasharray="1.5 1"/><circle cx="11" cy="11" r="1.2" fill="#fff"/></svg>
<svg style="left:207px;top:76px" width="15" height="15" viewBox="0 0 15 15"><path d="M0.5 3 L0.5 11 Q5 14 9.5 11 L9.5 3" fill="#EDEDED" stroke="#9A9A9A"/><ellipse cx="5" cy="3" rx="4.5" ry="2.2" fill="#FAFAFA" stroke="#9A9A9A"/><circle cx="10.5" cy="10.5" r="4" fill="#5DB55D" stroke="#3C8A3C"/><path d="M10.5 8 L10.5 13 M8 10.5 L13 10.5" stroke="#fff" stroke-width="1.5"/></svg>
<div class="ab" style="left:228px;top:75px;width:1px;height:17px;background:#C5C2B2"></div>
<svg style="left:237px;top:76px" width="14" height="13" viewBox="0 0 14 13"><rect x="0.5" y="0.5" width="13" height="12" fill="#F5F4EE" stroke="#B5B2A5"/><path d="M2 4 L12 4" stroke="#C8C5B8"/><path d="M5 10 L11 6 L11 10 Z" fill="none" stroke="#C8C5B8"/></svg>
<svg style="left:257px;top:80px" width="6" height="4" viewBox="0 0 6 4"><path d="M0 0 L6 0 L3 3 Z" fill="#C8C5B8"/></svg>
<div class="ab" style="left:272px;top:75px;width:1px;height:17px;background:#C5C2B2"></div>
<svg style="left:283px;top:76px" width="14" height="14" viewBox="0 0 14 14"><rect x="0.5" y="0.5" width="10" height="10" fill="#F0EFEA" stroke="#B5B2A5"/><rect x="3.5" y="3.5" width="10" height="10" fill="#FAFAF8" stroke="#B5B2A5"/><path d="M6 8.5 L11 8.5" stroke="#7A7A7A"/></svg>
<svg style="left:303px;top:75px" width="17" height="16" viewBox="0 0 17 16"><path d="M0.5 4.5 L5.5 0.5 V2.5 H11.5 V6.5 H5.5 V8.5 Z" fill="#FDE7A0" stroke="#CF9F2E"/><path d="M16 11 L11 7 V9 H5 V13 H11 V15 Z" fill="#FDE7A0" stroke="#CF9F2E"/></svg>
<svg style="left:328px;top:76px" width="11" height="7" viewBox="0 0 11 7"><path d="M0.5 0.5 L10.5 0.5 L5.5 6 Z" fill="#fff" stroke="#6A6A60"/></svg>
<div class="ab" style="left:310px;top:52px;width:10px;height:4px;border:1px solid #6A6A60;background:#fff"></div>
<div class="ab" style="left:328px;top:51px;width:10px;height:10px;border:1px solid #6A6A60;border-top-width:2px;background:#fff"></div>
<svg style="left:-3px;top:585px" width="17" height="13" viewBox="0 0 17 13"><rect x="0.5" y="0.5" width="16" height="12" fill="#F0F4FA" stroke="#7D93B8"/><path d="M1 4.5 L16 4.5 M1 8.5 L16 8.5 M5.5 1 L5.5 12 M10.5 1 L10.5 12" stroke="#A9B9D4"/></svg>
<svg style="left:127px;top:585px" width="12" height="12" viewBox="0 0 12 12"><path d="M3 3 L9 9 M9 3 L3 9" stroke="#6A6A62" stroke-width="3.6" stroke-linecap="square"/><path d="M3 3 L9 9 M9 3 L3 9" stroke="#FFFFFF" stroke-width="1.8" stroke-linecap="square"/></svg>
<svg style="left:241px;top:586px" width="13" height="13" viewBox="0 0 13 13"><rect x="0.5" y="0.5" width="9" height="9" fill="#F0EFEA" stroke="#C5C2B5"/><rect x="3.5" y="3.5" width="9" height="9" fill="#FAFAF8" stroke="#C5C2B5"/><path d="M5 8.5 L11 8.5" stroke="#8A8A8A"/></svg>
<svg style="left:264px;top:586px" width="13" height="13" viewBox="0 0 13 13"><rect x="0.5" y="0.5" width="9" height="9" fill="#F0EFEA" stroke="#C5C2B5"/><rect x="3.5" y="3.5" width="9" height="9" fill="#FAFAF8" stroke="#C5C2B5"/><path d="M5 8.5 L11 8.5 M8 5.5 L8 11.5" stroke="#8A8A8A"/></svg>
<svg style="left:285px;top:584px" width="17" height="16" viewBox="0 0 17 16"><path d="M0.5 4.5 L5.5 0.5 V2.5 H11.5 V6.5 H5.5 V8.5 Z" fill="#FDE7A0" stroke="#CF9F2E"/><path d="M16 11 L11 7 V9 H5 V13 H11 V15 Z" fill="#FDE7A0" stroke="#CF9F2E"/></svg>
<div class="ab" style="left:310px;top:585px;width:10px;height:4px;border:1px solid #6A6A60;background:#fff"></div>
<div class="ab" style="left:328px;top:585px;width:10px;height:10px;border:1px solid #6A6A60;border-top-width:2px;background:#fff"></div>
<svg style="left:7px;top:25px" width="18" height="17" viewBox="0 0 18 17"><path d="M9 1.5 H13.5 Q16.5 1.5 16.5 4.5 V15.5 H11" fill="none" stroke="#CFCCC0" stroke-width="1.2"/><path d="M1.5 15 L4 11 L6 11.5 L8.5 8 L10.5 9.5 L12.5 7 L13.5 9 L11 12.5 L9 12 L6.5 15 L4 15.5 Z" fill="#B5B2A5" stroke="#A5A295" stroke-width="1"/><path d="M13 10 L15 12" stroke="#A5A295"/></svg>
<svg style="left:33px;top:25px" width="16" height="17" viewBox="0 0 16 17"><rect x="0.5" y="1.5" width="11" height="13" rx="3" fill="#ECECEC" stroke="#9A9A9A"/><path d="M5 5 L11 5 L11 2.5 L15.5 6.5 L11 10 L11 7.5 L5 7.5 Z" fill="#7BC47B" stroke="#3E8E3E"/><path d="M13 11 L7 11 L7 8.5 L2.5 12.5 L7 16 L7 13.5 L13 13.5 Z" fill="#7BC47B" stroke="#3E8E3E"/></svg>
<svg style="left:53px;top:26px" width="17" height="15" viewBox="0 0 17 15"><path d="M4.5 9 L5 2 L13.5 11.5 L13.5 4" fill="none" stroke="#222" stroke-width="1.2"/><circle cx="4.5" cy="10.5" r="2.7" fill="#E23040" stroke="#B01828" stroke-width="0.8"/><circle cx="13.5" cy="3.5" r="2.7" fill="#E23040" stroke="#B01828" stroke-width="0.8"/><path d="M3 10.5 H6 M12 3.5 H15" stroke="#F5A0A8" stroke-width="0.8"/></svg>
<svg style="left:85px;top:24px" width="18" height="17" viewBox="0 0 18 17"><path d="M4 0.5 H14 Q16.5 0.5 16.5 3 Q16.5 5 14.5 5 L12.5 14.5 Q12 15.5 10.5 15.5 H2 Q0.5 15.5 0.5 14 Q0.5 12.5 2.5 12.5 Z" fill="#D8E6FA" stroke="#6F7F9E"/><path d="M2.5 12.5 H11" stroke="#FFFFFF"/><path d="M14 1 Q13 3 14.5 5" fill="none" stroke="#6F7F9E"/></svg>
<svg style="left:108px;top:24px" width="18" height="17" viewBox="0 0 18 17"><path d="M4 0.5 H14 Q16.5 0.5 16.5 3 Q16.5 5 14.5 5 L12.5 14.5 Q12 15.5 10.5 15.5 H2 Q0.5 15.5 0.5 14 Q0.5 12.5 2.5 12.5 Z" fill="#D8E6FA" stroke="#6F7F9E"/><path d="M2.5 12.5 H11" stroke="#FFFFFF"/><path d="M14 1 Q13 3 14.5 5" fill="none" stroke="#6F7F9E"/><circle cx="13" cy="13" r="3.6" fill="#62B35A" stroke="#3A7A32"/><path d="M13 11 L13 15 M11 13 L15 13" stroke="#fff" stroke-width="1.4"/></svg>
<svg style="left:131px;top:26px" width="15" height="14" viewBox="0 0 15 14"><path d="M1.5 5 L3 2 H5 V4 H10 V2 H12 L13.5 5 V13.5 H8.5 V8 H6.5 V13.5 H1.5 Z" fill="#3A4048" stroke="#23282E"/><rect x="2.5" y="8.5" width="3" height="3.5" fill="#9AA4B0"/><rect x="9.5" y="8.5" width="3" height="3.5" fill="#9AA4B0"/><path d="M3 6 H12" stroke="#7A8490"/></svg>
<svg style="left:170px;top:26px" width="18" height="17" viewBox="0 0 18 17"><rect x="1.5" y="1.5" width="2" height="4" fill="#F0EFE8" stroke="#A5A295"/><path d="M5.5 1.5 H10 Q13.5 1.5 13.5 5 V8.5 H16.5 L11 15.5 L5.5 8.5 H8.5 V6 Q8.5 4.5 7 4.5 H5.5 Z" fill="#ABA89B" stroke="#9F9C8F"/></svg>
<svg style="left:193px;top:25px" width="18" height="16" viewBox="0 0 18 16"><rect x="1.5" y="10.5" width="2" height="4" fill="#F0EFE8" stroke="#A5A295"/><path d="M5.5 13.5 H8 Q10.5 13.5 10.5 11 V8.5 H7 L11.5 2 L16.5 8.5 H13.5 V11 Q13.5 14.5 10 14.5 H5.5 Z" fill="#F3F2EC" stroke="#A5A295"/></svg>
<svg style="left:218px;top:25px" width="15" height="17" viewBox="0 0 15 17"><path d="M0.5 1 L2 0.5 L3.5 1.5 L5 0.5 L6.5 1.5 L8 0.5 L9.5 1.5 L11 0.5 L12.5 1.5 L14.5 1 V16 L12.5 16.5 L11 15.5 L9.5 16.5 L8 15.5 L6.5 16.5 L5 15.5 L3.5 16.5 L2 15.5 L0.5 16 Z" fill="#E4ECFA" stroke="#70788A"/><path d="M3 4.5 H6 M3 7.5 H5 M7 7.5 H9 M11 7.5 H12 M3 10.5 H6 M3 13 H5 M8 13 H9 M11 13 H12" stroke="#4A5A7A"/><path d="M1 9 H14" stroke="#C8D4EA"/></svg>
<svg style="left:238px;top:31px" width="7" height="4" viewBox="0 0 7 4"><path d="M0 0 L7 0 L3.5 4 Z" fill="#000"/></svg>
<svg style="left:266px;top:25px" width="17" height="16" viewBox="0 0 17 16"><path d="M0.5 5 L0.5 13 Q4.5 15.5 8.5 13 L8.5 5" fill="#F2F2F2" stroke="#8A8A8A"/><ellipse cx="4.5" cy="5" rx="4" ry="2" fill="#FAFAFA" stroke="#8A8A8A"/><path d="M7.5 2.5 L7.5 10 Q11.5 12.5 15.5 10 L15.5 2.5" fill="#F2F2F2" stroke="#8A8A8A"/><ellipse cx="11.5" cy="2.5" rx="4" ry="2" fill="#FAFAFA" stroke="#8A8A8A"/></svg>
<svg style="left:420px;top:24px" width="14" height="17" viewBox="0 0 14 17"><path d="M0.5 3 L0.5 13 Q7 17 13.5 13 L13.5 3" fill="#F6DA78" stroke="#C9A032"/><ellipse cx="7" cy="3" rx="6.5" ry="2.5" fill="#FFF3C0" stroke="#C9A032"/><path d="M0.5 6.5 Q7 10 13.5 6.5 M0.5 10 Q7 13.5 13.5 10" fill="none" stroke="#C9A032"/></svg>
<svg style="left:625px;top:25px" width="16" height="17" viewBox="0 0 16 17"><path d="M0.5 0.5 L4.5 0.5 L4.5 5.5 L10.5 5.5 L10.5 0.5 L14.5 0.5 L14.5 16.5 L0.5 16.5 Z" fill="none" stroke="#B5B2A5"/><rect x="3.5" y="9.5" width="8" height="7" fill="#E8E6DC" stroke="#B5B2A5"/></svg>
<svg style="left:680px;top:25px" width="16" height="17" viewBox="0 0 16 17"><path d="M0.5 0.5 L8 0.5 L11.5 4 L11.5 16.5 L0.5 16.5 Z" fill="#F5F4EE" stroke="#B5B2A5"/><path d="M3 6 L8 6 M3 9 L8 9" stroke="#C5C2B5"/><path d="M9 10 L15 16 M15 10 L9 16" stroke="#A5A295" stroke-width="2"/></svg>
<svg style="left:748px;top:26px" width="16" height="16" viewBox="0 0 16 16"><path d="M4 10 L1 6 L6 6 M2 6 Q4 1 9 1 Q15 1 15 7 Q15 13 8 15" fill="none" stroke="#CFCCC0" stroke-width="3"/></svg>
<svg style="left:771px;top:26px" width="16" height="16" viewBox="0 0 16 16"><path d="M12 10 L15 6 L10 6 M14 6 Q12 1 7 1 Q1 1 1 7 Q1 13 8 15" fill="none" stroke="#CFCCC0" stroke-width="3"/></svg>
<svg style="left:803px;top:26px" width="17" height="17" viewBox="0 0 17 17"><path d="M0.5 3.5 L0.5 16.5 L15.5 16.5 L15.5 8" fill="none" stroke="#ACA99C" stroke-dasharray="3 1"/><path d="M12 0.5 L12 7 M9 3.5 L15 3.5" stroke="#ACA99C"/></svg>
<svg style="left:829px;top:26px" width="14" height="14" viewBox="0 0 14 14"><path d="M2 2 L12 12 M12 2 L2 12" stroke="#B5B2A5" stroke-width="3.5"/></svg>
<svg style="left:859px;top:25px" width="16" height="17" viewBox="0 0 16 17"><path d="M0.5 0.5 L10 0.5 L14.5 5 L14.5 16.5 L0.5 16.5 Z" fill="#FAFAF6" stroke="#8A8A80"/><path d="M4 6 L8 3 L8 5 L11 5 L11 7 L8 7 L8 9 Z M11 11 L7 14 L7 12 L4 12 L4 10 L7 10 L7 8 Z" fill="#F6D16A" stroke="#C99A2E" stroke-width="0.8"/></svg>
</body></html>
